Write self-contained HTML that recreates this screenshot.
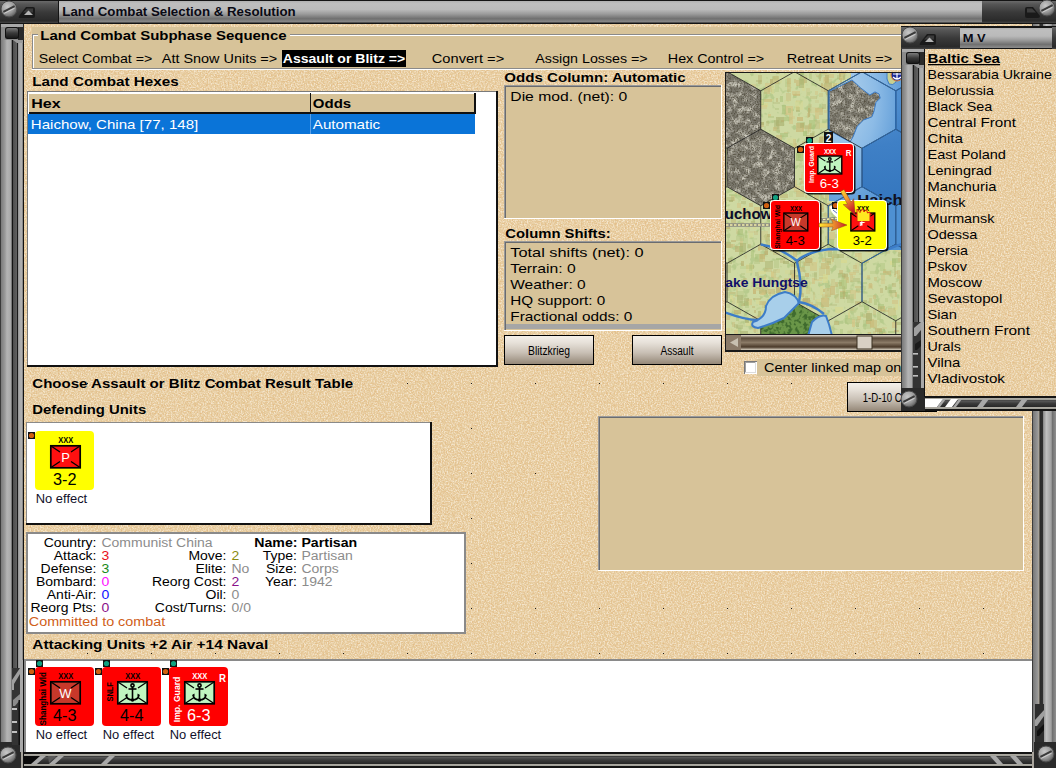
<!DOCTYPE html>
<html><head><meta charset="utf-8"><title>Land Combat Selection &amp; Resolution</title>
<style>html,body{margin:0;padding:0;width:1056px;height:768px;overflow:hidden;background:#e4cda4;font-family:"Liberation Sans", sans-serif}</style>
</head><body>
<svg width="1056" height="768" viewBox="0 0 1056 768" font-family="&quot;Liberation Sans&quot;, sans-serif" style="display:block">

<defs>
 <filter id="sand" x="0" y="0" width="100%" height="100%" color-interpolation-filters="sRGB">
  <feTurbulence type="fractalNoise" baseFrequency="0.7" numOctaves="2" seed="3"/>
  <feColorMatrix type="matrix" values="0 0 0 0 0.96  0 0 0 0 0.90  0 0 0 0 0.80  2.8 0 0 0 -1.15"/>
  <feComposite in2="SourceGraphic" operator="in"/>
 </filter>
 <filter id="sand2" x="0" y="0" width="100%" height="100%" color-interpolation-filters="sRGB">
  <feTurbulence type="fractalNoise" baseFrequency="0.6" numOctaves="2" seed="8"/>
  <feColorMatrix type="matrix" values="0 0 0 0 0.89  0 0 0 0 0.73  0 0 0 0 0.52  0 2.8 0 0 -1.25"/>
  <feComposite in2="SourceGraphic" operator="in"/>
 </filter>
 <linearGradient id="vframeL" x1="0" x2="1" y1="0" y2="0">
  <stop offset="0.0000" stop-color="#3a3a3a"/><stop offset="0.0417" stop-color="#3a3a3a"/><stop offset="0.0417" stop-color="#7a7a7a"/><stop offset="0.2083" stop-color="#9a9a9a"/><stop offset="0.2917" stop-color="#b4b4b4"/><stop offset="0.4583" stop-color="#a8a8a8"/><stop offset="0.4583" stop-color="#7a7a7a"/><stop offset="0.5000" stop-color="#7a7a7a"/><stop offset="0.5000" stop-color="#141414"/><stop offset="0.5417" stop-color="#141414"/><stop offset="0.5417" stop-color="#4e4e4e"/><stop offset="0.7083" stop-color="#626262"/><stop offset="0.7083" stop-color="#1a1a1a"/><stop offset="0.7500" stop-color="#1a1a1a"/><stop offset="0.7500" stop-color="#8a8a8a"/><stop offset="0.7917" stop-color="#a8a8a8"/><stop offset="0.9167" stop-color="#b0b0b0"/><stop offset="0.9167" stop-color="#8a8a8a"/><stop offset="0.9583" stop-color="#8a8a8a"/><stop offset="0.9583" stop-color="#111"/><stop offset="1.0000" stop-color="#111"/>
 </linearGradient>
 <linearGradient id="vframeR" x1="0" x2="1" y1="0" y2="0">
  <stop offset="0" stop-color="#1a1a1a"/><stop offset="0.06" stop-color="#7a7a7a"/>
  <stop offset="0.25" stop-color="#9a9a9a"/><stop offset="0.29" stop-color="#b0a898"/>
  <stop offset="0.33" stop-color="#2a2a2a"/><stop offset="0.45" stop-color="#303030"/>
  <stop offset="0.48" stop-color="#909090"/><stop offset="0.6" stop-color="#c0c0c0"/>
  <stop offset="0.8" stop-color="#a0a0a0"/><stop offset="0.85" stop-color="#707070"/>
  <stop offset="1" stop-color="#909090"/>
 </linearGradient>
 <linearGradient id="titleG" x1="0" x2="0" y1="0" y2="1">
  <stop offset="0" stop-color="#b0b0b0"/><stop offset="0.12" stop-color="#bebebe"/>
  <stop offset="0.4" stop-color="#bababa"/><stop offset="0.6" stop-color="#9c9c9c"/>
  <stop offset="0.82" stop-color="#707070"/><stop offset="1" stop-color="#8c8c8c"/>
 </linearGradient>
 <linearGradient id="darkG" x1="0" x2="0" y1="0" y2="1">
  <stop offset="0" stop-color="#6a6a6a"/><stop offset="0.15" stop-color="#555"/>
  <stop offset="0.5" stop-color="#3a3a3a"/><stop offset="0.9" stop-color="#2a2a2a"/>
  <stop offset="1" stop-color="#444"/>
 </linearGradient>
 <linearGradient id="hbarG" x1="0" x2="0" y1="0" y2="1">
  <stop offset="0" stop-color="#141414"/><stop offset="0.12" stop-color="#141414"/>
  <stop offset="0.12" stop-color="#b0aca4"/><stop offset="0.24" stop-color="#a0a098"/>
  <stop offset="0.24" stop-color="#1a1a1a"/><stop offset="0.32" stop-color="#5a5a5a"/>
  <stop offset="0.5" stop-color="#3a3a3a"/><stop offset="0.74" stop-color="#262626"/>
  <stop offset="0.74" stop-color="#b0aca4"/><stop offset="0.86" stop-color="#a0a098"/>
  <stop offset="0.86" stop-color="#141414"/><stop offset="1" stop-color="#141414"/>
 </linearGradient>
 <linearGradient id="btnG" x1="0" x2="0" y1="0" y2="1">
  <stop offset="0" stop-color="#f4f0ea"/><stop offset="0.25" stop-color="#e6e0d8"/>
  <stop offset="0.6" stop-color="#c8bfb4"/><stop offset="1" stop-color="#958878"/>
 </linearGradient>
 <radialGradient id="screwG" cx="0.4" cy="0.35" r="0.7">
  <stop offset="0" stop-color="#c8c8c8"/><stop offset="0.6" stop-color="#9a9a9a"/><stop offset="1" stop-color="#5a5a5a"/>
 </radialGradient>
 <linearGradient id="scrollG" x1="0" x2="0" y1="0" y2="1">
  <stop offset="0" stop-color="#e8e0d0"/><stop offset="0.2" stop-color="#5a4a3a"/>
  <stop offset="0.5" stop-color="#8a7a66"/><stop offset="0.8" stop-color="#4a3a2a"/><stop offset="1" stop-color="#d8d0c0"/>
 </linearGradient>
</defs>

<rect x="0" y="0" width="1056" height="768" fill="#e6cb9c" />
<rect x="0" y="0" width="1056" height="768" fill="#fff" filter="url(#sand2)"/>
<rect x="0" y="0" width="1056" height="768" fill="#fff" filter="url(#sand)"/>
<rect x="87" y="383" width="1" height="1" fill="#1a1a1a" />
<rect x="151" y="383" width="1" height="1" fill="#1a1a1a" />
<rect x="215" y="383" width="1" height="1" fill="#1a1a1a" />
<rect x="279" y="383" width="1" height="1" fill="#1a1a1a" />
<rect x="343" y="383" width="1" height="1" fill="#1a1a1a" />
<rect x="407" y="383" width="1" height="1" fill="#1a1a1a" />
<rect x="471" y="383" width="1" height="1" fill="#1a1a1a" />
<rect x="535" y="383" width="1" height="1" fill="#1a1a1a" />
<rect x="599" y="383" width="1" height="1" fill="#1a1a1a" />
<rect x="663" y="383" width="1" height="1" fill="#1a1a1a" />
<rect x="727" y="383" width="1" height="1" fill="#1a1a1a" />
<rect x="791" y="383" width="1" height="1" fill="#1a1a1a" />
<rect x="855" y="383" width="1" height="1" fill="#1a1a1a" />
<rect x="919" y="383" width="1" height="1" fill="#1a1a1a" />
<rect x="983" y="383" width="1" height="1" fill="#1a1a1a" />
<rect x="471" y="428" width="1" height="1" fill="#1a1a1a" />
<rect x="471" y="473" width="1" height="1" fill="#1a1a1a" />
<rect x="535" y="473" width="1" height="1" fill="#1a1a1a" />
<rect x="471" y="518" width="1" height="1" fill="#1a1a1a" />
<rect x="471" y="563" width="1" height="1" fill="#1a1a1a" />
<rect x="87" y="608" width="1" height="1" fill="#1a1a1a" />
<rect x="151" y="608" width="1" height="1" fill="#1a1a1a" />
<rect x="215" y="608" width="1" height="1" fill="#1a1a1a" />
<rect x="279" y="608" width="1" height="1" fill="#1a1a1a" />
<rect x="343" y="608" width="1" height="1" fill="#1a1a1a" />
<rect x="407" y="608" width="1" height="1" fill="#1a1a1a" />
<rect x="471" y="608" width="1" height="1" fill="#1a1a1a" />
<rect x="535" y="608" width="1" height="1" fill="#1a1a1a" />
<rect x="599" y="608" width="1" height="1" fill="#1a1a1a" />
<rect x="663" y="608" width="1" height="1" fill="#1a1a1a" />
<rect x="727" y="608" width="1" height="1" fill="#1a1a1a" />
<rect x="791" y="608" width="1" height="1" fill="#1a1a1a" />
<rect x="855" y="608" width="1" height="1" fill="#1a1a1a" />
<rect x="919" y="608" width="1" height="1" fill="#1a1a1a" />
<rect x="983" y="608" width="1" height="1" fill="#1a1a1a" />
<rect x="87" y="653" width="1" height="1" fill="#1a1a1a" />
<rect x="151" y="653" width="1" height="1" fill="#1a1a1a" />
<rect x="215" y="653" width="1" height="1" fill="#1a1a1a" />
<rect x="279" y="653" width="1" height="1" fill="#1a1a1a" />
<rect x="343" y="653" width="1" height="1" fill="#1a1a1a" />
<rect x="407" y="653" width="1" height="1" fill="#1a1a1a" />
<rect x="471" y="653" width="1" height="1" fill="#1a1a1a" />
<rect x="535" y="653" width="1" height="1" fill="#1a1a1a" />
<rect x="599" y="653" width="1" height="1" fill="#1a1a1a" />
<rect x="663" y="653" width="1" height="1" fill="#1a1a1a" />
<rect x="727" y="653" width="1" height="1" fill="#1a1a1a" />
<rect x="791" y="653" width="1" height="1" fill="#1a1a1a" />
<rect x="855" y="653" width="1" height="1" fill="#1a1a1a" />
<rect x="919" y="653" width="1" height="1" fill="#1a1a1a" />
<rect x="983" y="653" width="1" height="1" fill="#1a1a1a" />
<rect x="0" y="0" width="1056" height="24" fill="#141414" />
<rect x="0" y="1" width="58" height="22" fill="url(#darkG)" />
<rect x="59" y="1" width="923" height="21.5" fill="url(#titleG)" />
<rect x="982" y="1" width="74" height="22" fill="url(#darkG)" />
<circle cx="9" cy="9" r="8" fill="url(#screwG)" stroke="#4a4a4a" stroke-width="1"/>
<line x1="3.4000000000000004" y1="11.8" x2="14.6" y2="6.2" stroke="#3a3a3a" stroke-width="2"/>
<line x1="4.2" y1="13.4" x2="14.6" y2="8.2" stroke="#d0d0d0" stroke-width="1"/>
<path d="M26 7 H33 Q35 7 35 9 V16 Q35 18 33 18 H20 Q18 18 19 16 Z" fill="#1a1a1a"/>
<path d="M27 8.5 H33 V12.5 H23Z" fill="#3a3a3a"/>
<path d="M24.0 15 L28.5 10.5 L33.0 15 Z" fill="#b4b4b4"/>
<path d="M1027 7 H1033 L1040 16 Q1040 18 1038 18 H1027 Q1025 18 1025 16 V9 Q1025 7 1027 7 Z" fill="#1a1a1a"/>
<path d="M1027 8.5 H1032 L1036 12.5 H1027Z" fill="#3e3e3e"/>
<circle cx="1047" cy="8" r="8" fill="url(#screwG)" stroke="#4a4a4a" stroke-width="1"/>
<line x1="1041.4" y1="10.8" x2="1052.6" y2="5.2" stroke="#3a3a3a" stroke-width="2"/>
<line x1="1042.2" y1="12.4" x2="1052.6" y2="7.2" stroke="#d0d0d0" stroke-width="1"/>
<text x="62.3" y="16" font-size="12" font-weight="bold" fill="#0a0a14" textLength="233.4" lengthAdjust="spacingAndGlyphs" >Land Combat Selection &amp; Resolution</text>
<rect x="0" y="24" width="24" height="744" fill="url(#vframeL)" />
<rect x="0" y="24" width="24" height="16" fill="#2a2a2a" />
<rect x="1" y="24" width="22" height="3" fill="#a8a8a8" />
<rect x="1" y="27" width="17" height="13" fill="#8a8a8a" />
<defs><linearGradient id="blkG0" x1="0" x2="0" y1="0" y2="1"><stop offset="0" stop-color="#7a7a7a"/><stop offset="0.5" stop-color="#3a3a3a"/><stop offset="1" stop-color="#1a1a1a"/></linearGradient></defs>
<rect x="5" y="27" width="14" height="12" fill="#111" rx="2.5"/>
<rect x="6" y="28" width="12" height="10" fill="url(#blkG0)" rx="2"/>
<path d="M13 40 L23 40 L23 43 L17 43 Z" fill="#9a9a9a"/>
<rect x="1032" y="24" width="24" height="744" fill="url(#vframeR)" />
<rect x="24" y="752" width="1009" height="16" fill="url(#hbarG)" />
<path d="M24 756 H44 L37 764 H24 Z" fill="#0a0a0a"/>
<path d="M31 764 L40 756 L46 756 L37 764 Z" fill="#a8a8a8"/>
<path d="M49 764 L58 756 L64 756 L55 764 Z" fill="#a8a8a8"/>
<path d="M101 764 L109 756 L115 756 L107 764 Z" fill="#a8a8a8"/>
<path d="M48 756 L56 756 L49 763 Z" fill="#5a5a5a"/>
<path d="M990 756 L996 756 L1003 764 L997 764 Z" fill="#a8a8a8"/>
<path d="M1010 756 L1016 756 L1023 764 L1017 764 Z" fill="#a8a8a8"/>
<rect x="0" y="742" width="22" height="26" fill="#2a2a2a" />
<rect x="21" y="752" width="2" height="16" fill="#a8a49c" />
<circle cx="8" cy="755" r="8" fill="url(#screwG)" stroke="#4a4a4a" stroke-width="1"/>
<line x1="2.4000000000000004" y1="757.8" x2="13.6" y2="752.2" stroke="#3a3a3a" stroke-width="2"/>
<line x1="3.2" y1="759.4" x2="13.6" y2="754.2" stroke="#d0d0d0" stroke-width="1"/>
<rect x="1035" y="704" width="9" height="40" fill="#2e2e2e" />
<path d="M1044 710 L1044 716 L1037 726 L1035 726 L1035 720 Z" fill="#a0a0a0"/>
<path d="M1044 724 L1044 730 L1039 736 L1037 736 L1037 731 Z" fill="#111"/>
<rect x="1034" y="742" width="22" height="26" fill="#2a2a2a" />
<rect x="1032" y="752" width="2" height="16" fill="#a8a49c" />
<circle cx="1046" cy="754" r="8" fill="url(#screwG)" stroke="#4a4a4a" stroke-width="1"/>
<line x1="1040.4" y1="756.8" x2="1051.6" y2="751.2" stroke="#3a3a3a" stroke-width="2"/>
<line x1="1041.2" y1="758.4" x2="1051.6" y2="753.2" stroke="#d0d0d0" stroke-width="1"/>
<rect x="12" y="668" width="8" height="77" fill="#333" />
<path d="M20 668 L20 674 L14 684 L14 690 L12 690 L12 680 Z" fill="#a0a0a0"/>
<path d="M20 694 L20 700 L15 706 L13 706 L13 700 Z" fill="#8a8a8a"/>
<rect x="18.5" y="700" width="1.5" height="45" fill="#111" />
<rect x="20" y="660" width="3" height="92" fill="#a8a8a8" />
<rect x="12" y="708" width="5" height="2" fill="#c0c0c0" />
<rect x="12" y="721" width="5" height="2" fill="#c0c0c0" />
<rect x="12" y="731" width="5" height="2" fill="#c0c0c0" />
<rect x="32" y="27" width="870" height="43" fill="#d7c399" />
<rect x="32" y="34" width="870" height="1" fill="#8a8a8a" />
<rect x="33" y="35" width="869" height="1" fill="#fff" />
<rect x="32" y="34" width="1" height="35" fill="#8a8a8a" />
<rect x="33" y="35" width="1" height="34" fill="#fff" />
<rect x="32" y="68" width="870" height="1" fill="#8a8a8a" />
<rect x="32" y="69" width="870" height="1" fill="#fff" />
<rect x="38" y="27" width="252" height="14" fill="#d7c399" />
<text x="40.3" y="40" font-size="13" font-weight="bold" fill="#000" textLength="246.4" lengthAdjust="spacingAndGlyphs" >Land Combat Subphase Sequence</text>
<text x="38.8" y="63" font-size="13" fill="#000" textLength="113.4" lengthAdjust="spacingAndGlyphs" >Select Combat =&gt;</text>
<text x="161.8" y="63" font-size="13" fill="#000" textLength="115.4" lengthAdjust="spacingAndGlyphs" >Att Snow Units =&gt;</text>
<rect x="282" y="50" width="124" height="17" fill="#000" />
<text x="282.8" y="63" font-size="13" font-weight="bold" fill="#fff" textLength="122.4" lengthAdjust="spacingAndGlyphs" >Assault or Blitz =&gt;</text>
<text x="431.8" y="63" font-size="13" fill="#000" textLength="72.4" lengthAdjust="spacingAndGlyphs" >Convert =&gt;</text>
<text x="535.3" y="63" font-size="13" fill="#000" textLength="112.4" lengthAdjust="spacingAndGlyphs" >Assign Losses =&gt;</text>
<text x="667.8" y="63" font-size="13" fill="#000" textLength="96.4" lengthAdjust="spacingAndGlyphs" >Hex Control =&gt;</text>
<text x="786.8" y="63" font-size="13" fill="#000" textLength="105.4" lengthAdjust="spacingAndGlyphs" >Retreat Units =&gt;</text>
<text x="32.3" y="86" font-size="13" font-weight="bold" fill="#000" textLength="146.4" lengthAdjust="spacingAndGlyphs" >Land Combat Hexes</text>
<rect x="27" y="91" width="471" height="276" fill="#fff" />
<rect x="27" y="91" width="470" height="1" fill="#7a7a7a" />
<rect x="27" y="91" width="1" height="275" fill="#7a7a7a" />
<rect x="496" y="91" width="2" height="276" fill="#111" />
<rect x="27" y="365" width="471" height="2" fill="#111" />
<rect x="29" y="93" width="447" height="20" fill="#d7c399" />
<rect x="28" y="93" width="448" height="1" fill="#fff" />
<rect x="310" y="93" width="1" height="20" fill="#111" />
<rect x="474" y="93" width="2" height="21" fill="#111" />
<rect x="29" y="112" width="447" height="2" fill="#111" />
<text x="31.3" y="108" font-size="13" font-weight="bold" fill="#000" textLength="29.4" lengthAdjust="spacingAndGlyphs" >Hex</text>
<text x="312.8" y="108" font-size="13" font-weight="bold" fill="#000" textLength="38.4" lengthAdjust="spacingAndGlyphs" >Odds</text>
<rect x="28" y="114" width="447" height="20" fill="#0a74d8" />
<rect x="310" y="114" width="1" height="20" fill="#5aa0e8" />
<text x="30.8" y="129" font-size="13" fill="#fff" textLength="167.4" lengthAdjust="spacingAndGlyphs" >Haichow, China [77, 148]</text>
<text x="312.8" y="129" font-size="13" fill="#fff" textLength="67.4" lengthAdjust="spacingAndGlyphs" >Automatic</text>
<text x="504.3" y="82" font-size="13" font-weight="bold" fill="#000" textLength="181.4" lengthAdjust="spacingAndGlyphs" >Odds Column: Automatic</text>
<rect x="504" y="85" width="218" height="134" fill="#d7c399" />
<rect x="504" y="85" width="218" height="2" fill="#9a9a9a" />
<rect x="504" y="85" width="2" height="134" fill="#9a9a9a" />
<rect x="505" y="86" width="216" height="1" fill="#6a6c70" />
<rect x="505" y="86" width="1" height="132" fill="#6a6c70" />
<rect x="504" y="218" width="218" height="1" fill="#fff" />
<rect x="721" y="85" width="1" height="134" fill="#fff" />
<text x="510.3" y="101" font-size="13" fill="#000" textLength="116.9" lengthAdjust="spacingAndGlyphs" >Die mod. (net): 0</text>
<text x="505.3" y="238" font-size="13" font-weight="bold" fill="#000" textLength="105.4" lengthAdjust="spacingAndGlyphs" >Column Shifts:</text>
<rect x="504" y="241" width="218" height="90" fill="#d7c399" />
<rect x="504" y="241" width="218" height="2" fill="#9a9a9a" />
<rect x="504" y="241" width="2" height="90" fill="#9a9a9a" />
<rect x="505" y="242" width="216" height="1" fill="#6a6c70" />
<rect x="505" y="242" width="1" height="88" fill="#6a6c70" />
<rect x="504" y="330" width="218" height="1" fill="#fff" />
<rect x="721" y="241" width="1" height="90" fill="#fff" />
<rect x="506" y="324" width="215" height="5" fill="#a6a6a6" />
<text x="510.3" y="257" font-size="13" fill="#000" textLength="133.4" lengthAdjust="spacingAndGlyphs" >Total shifts (net): 0</text>
<text x="510.3" y="273" font-size="13" fill="#000" textLength="65.4" lengthAdjust="spacingAndGlyphs" >Terrain: 0</text>
<text x="510.3" y="289" font-size="13" fill="#000" textLength="75.4" lengthAdjust="spacingAndGlyphs" >Weather: 0</text>
<text x="510.3" y="305" font-size="13" fill="#000" textLength="94.9" lengthAdjust="spacingAndGlyphs" >HQ support: 0</text>
<text x="510.3" y="321" font-size="13" fill="#000" textLength="121.9" lengthAdjust="spacingAndGlyphs" >Fractional odds: 0</text>
<rect x="504" y="335" width="90" height="30" fill="#000" />
<rect x="505" y="336" width="88" height="28" fill="url(#btnG)" />
<text x="549.0" y="354.5" font-size="12" fill="#000" textLength="42" lengthAdjust="spacingAndGlyphs" text-anchor="middle" >Blitzkrieg</text>
<rect x="632" y="335" width="90" height="30" fill="#000" />
<rect x="633" y="336" width="88" height="28" fill="url(#btnG)" />
<text x="677.0" y="354.5" font-size="12" fill="#000" textLength="33" lengthAdjust="spacingAndGlyphs" text-anchor="middle" >Assault</text>
<text x="32.3" y="388" font-size="13" font-weight="bold" fill="#000" textLength="320.9" lengthAdjust="spacingAndGlyphs" >Choose Assault or Blitz Combat Result Table</text>
<text x="32.3" y="413.5" font-size="13" font-weight="bold" fill="#000" textLength="113.9" lengthAdjust="spacingAndGlyphs" >Defending Units</text>
<text x="32.3" y="648.5" font-size="13" font-weight="bold" fill="#000" textLength="235.9" lengthAdjust="spacingAndGlyphs" >Attacking Units +2 Air +14 Naval</text>
<rect x="757" y="359" width="145" height="17" fill="#d7c399" />
<rect x="744" y="361" width="13" height="13" fill="#fff" />
<rect x="744" y="361" width="13" height="1" fill="#7a7a7a" />
<rect x="744" y="361" width="1" height="13" fill="#7a7a7a" />
<rect x="745" y="362" width="11" height="1" fill="#a0a0a0" />
<rect x="745" y="362" width="1" height="11" fill="#a0a0a0" />
<rect x="745" y="372" width="11" height="1" fill="#dcdcdc" />
<rect x="755" y="362" width="1" height="11" fill="#dcdcdc" />
<text x="764" y="372" font-size="13" fill="#000" textLength="137.2" lengthAdjust="spacingAndGlyphs" >Center linked map on</text>
<rect x="847" y="382" width="90" height="30" fill="#000" />
<rect x="848" y="383" width="88" height="28" fill="url(#btnG)" />
<text x="862.8" y="401.5" font-size="12" fill="#000" textLength="51.4" lengthAdjust="spacingAndGlyphs" >1-D-10 CRT</text>
<rect x="26" y="422" width="406" height="103" fill="#fff" />
<rect x="26" y="422" width="406" height="1" fill="#8a8a8a" />
<rect x="26" y="422" width="1" height="103" fill="#8a8a8a" />
<rect x="26" y="523" width="406" height="2" fill="#111" />
<rect x="430" y="422" width="2" height="103" fill="#111" />
<rect x="26" y="532" width="440" height="102" fill="#fff" />
<rect x="26" y="532" width="440" height="2" fill="#8a8a8a" />
<rect x="26" y="532" width="2" height="102" fill="#8a8a8a" />
<rect x="26" y="632" width="440" height="2" fill="#8a8a8a" />
<rect x="464" y="532" width="2" height="102" fill="#8a8a8a" />
<rect x="598" y="416" width="426" height="155" fill="#d7c399" />
<rect x="598" y="416" width="426" height="2" fill="#9a9a9a" />
<rect x="598" y="416" width="2" height="155" fill="#9a9a9a" />
<rect x="599" y="417" width="424" height="1" fill="#6a6c70" />
<rect x="599" y="417" width="1" height="153" fill="#6a6c70" />
<rect x="598" y="570" width="426" height="1" fill="#fff" />
<rect x="1023" y="416" width="1" height="155" fill="#fff" />
<rect x="24" y="659" width="1008" height="93" fill="#fff" />
<rect x="24" y="659" width="1008" height="2" fill="#8a8a8a" />
<rect x="24" y="659" width="2" height="93" fill="#8a8a8a" />
<text x="96.5" y="546.5" font-size="12" fill="#000" textLength="52.8" lengthAdjust="spacingAndGlyphs" text-anchor="end" >Country:</text>
<text x="101.5" y="546.5" font-size="12" fill="#8c8c8c" textLength="111.1" lengthAdjust="spacingAndGlyphs" >Communist China</text>
<text x="96.5" y="559.5" font-size="12" fill="#000" textLength="42.7" lengthAdjust="spacingAndGlyphs" text-anchor="end" >Attack:</text>
<text x="101.5" y="559.5" font-size="12" fill="#e8101a" textLength="7.8" lengthAdjust="spacingAndGlyphs" >3</text>
<text x="96.5" y="572.5" font-size="12" fill="#000" textLength="55.9" lengthAdjust="spacingAndGlyphs" text-anchor="end" >Defense:</text>
<text x="101.5" y="572.5" font-size="12" fill="#1a8a1a" textLength="7.8" lengthAdjust="spacingAndGlyphs" >3</text>
<text x="96.5" y="585.5" font-size="12" fill="#000" textLength="60.6" lengthAdjust="spacingAndGlyphs" text-anchor="end" >Bombard:</text>
<text x="101.5" y="585.5" font-size="12" fill="#ff10ff" textLength="7.8" lengthAdjust="spacingAndGlyphs" >0</text>
<text x="96.5" y="598.5" font-size="12" fill="#000" textLength="49.7" lengthAdjust="spacingAndGlyphs" text-anchor="end" >Anti-Air:</text>
<text x="101.5" y="598.5" font-size="12" fill="#1010ff" textLength="7.8" lengthAdjust="spacingAndGlyphs" >0</text>
<text x="96.5" y="611.5" font-size="12" fill="#000" textLength="66.0" lengthAdjust="spacingAndGlyphs" text-anchor="end" >Reorg Pts:</text>
<text x="101.5" y="611.5" font-size="12" fill="#8a108a" textLength="7.8" lengthAdjust="spacingAndGlyphs" >0</text>
<text x="28.8" y="625.5" font-size="12" fill="#d0601a" textLength="136.4" lengthAdjust="spacingAndGlyphs" >Committed to combat</text>
<text x="226.5" y="559.5" font-size="12" fill="#000" textLength="38.1" lengthAdjust="spacingAndGlyphs" text-anchor="end" >Move:</text>
<text x="231.5" y="559.5" font-size="12" fill="#8a8a10" textLength="7.8" lengthAdjust="spacingAndGlyphs" >2</text>
<text x="226.5" y="572.5" font-size="12" fill="#000" textLength="31.1" lengthAdjust="spacingAndGlyphs" text-anchor="end" >Elite:</text>
<text x="231.5" y="572.5" font-size="12" fill="#8c8c8c" textLength="17.9" lengthAdjust="spacingAndGlyphs" >No</text>
<text x="226.5" y="585.5" font-size="12" fill="#000" textLength="74.6" lengthAdjust="spacingAndGlyphs" text-anchor="end" >Reorg Cost:</text>
<text x="231.5" y="585.5" font-size="12" fill="#8a108a" textLength="7.8" lengthAdjust="spacingAndGlyphs" >2</text>
<text x="226.5" y="598.5" font-size="12" fill="#000" textLength="21.0" lengthAdjust="spacingAndGlyphs" text-anchor="end" >Oil:</text>
<text x="231.5" y="598.5" font-size="12" fill="#8c8c8c" textLength="7.8" lengthAdjust="spacingAndGlyphs" >0</text>
<text x="226.5" y="611.5" font-size="12" fill="#000" textLength="71.7" lengthAdjust="spacingAndGlyphs" text-anchor="end" >Cost/Turns:</text>
<text x="231.5" y="611.5" font-size="12" fill="#8c8c8c" textLength="19.4" lengthAdjust="spacingAndGlyphs" >0/0</text>
<text x="254.3" y="546.5" font-size="12" font-weight="bold" fill="#000" textLength="102.9" lengthAdjust="spacingAndGlyphs" >Name: Partisan</text>
<text x="297" y="559.5" font-size="12" fill="#000" textLength="34.2" lengthAdjust="spacingAndGlyphs" text-anchor="end" >Type:</text>
<text x="301.5" y="559.5" font-size="12" fill="#8c8c8c" textLength="51.3" lengthAdjust="spacingAndGlyphs" >Partisan</text>
<text x="297" y="572.5" font-size="12" fill="#000" textLength="31.1" lengthAdjust="spacingAndGlyphs" text-anchor="end" >Size:</text>
<text x="301.5" y="572.5" font-size="12" fill="#8c8c8c" textLength="37.3" lengthAdjust="spacingAndGlyphs" >Corps</text>
<text x="297" y="585.5" font-size="12" fill="#000" textLength="32.1" lengthAdjust="spacingAndGlyphs" text-anchor="end" >Year:</text>
<text x="301.5" y="585.5" font-size="12" fill="#8c8c8c" textLength="31.1" lengthAdjust="spacingAndGlyphs" >1942</text>
<rect x="28" y="432" width="7" height="7" fill="#111" />
<circle cx="31.5" cy="435.5" r="2.6" fill="#d06010"/>
<g transform="translate(35,431) scale(1)">
<rect x="0" y="0" width="59" height="59" rx="4" fill="#ffff00"/>
<text x="30.8" y="12.3" font-size="9" font-weight="bold" fill="#000" textLength="15" lengthAdjust="spacingAndGlyphs" text-anchor="middle" >XXX</text>
<rect x="15.8" y="14.8" width="29.4" height="22" fill="#ff1010" stroke="#000" stroke-width="1.7"/>
<line x1="16" y1="15" x2="25" y2="21" stroke="#000" stroke-width="1.3"/>
<line x1="45" y1="15" x2="36" y2="21" stroke="#000" stroke-width="1.3"/>
<line x1="16" y1="36.5" x2="25" y2="30.5" stroke="#000" stroke-width="1.3"/>
<line x1="45" y1="36.5" x2="36" y2="30.5" stroke="#000" stroke-width="1.3"/>
<text x="30.5" y="30.5" font-size="13" fill="#fff" text-anchor="middle" >P</text>
<text x="29.8" y="54.2" font-size="16" fill="#000" textLength="23.5" lengthAdjust="spacingAndGlyphs" text-anchor="middle" >3-2</text>
</g>
<text x="35.8" y="502.5" font-size="12" fill="#10102a" textLength="51.4" lengthAdjust="spacingAndGlyphs" >No effect</text>
<rect x="28" y="668" width="7" height="7" fill="#111" />
<circle cx="31.5" cy="671.5" r="2.6" fill="#d06010"/>
<rect x="36" y="660" width="7" height="7" fill="#111" />
<circle cx="39.5" cy="663.5" r="2.6" fill="#10a080"/>
<g transform="translate(35,667) scale(1)">
<rect x="0" y="0" width="59" height="59" rx="4" fill="#ff0000"/>
<text x="30.8" y="12.3" font-size="9" font-weight="bold" fill="#000" textLength="15" lengthAdjust="spacingAndGlyphs" text-anchor="middle" >XXX</text>
<rect x="15.8" y="14.8" width="29.4" height="22" fill="#c8382a" stroke="#000" stroke-width="1.7"/>
<line x1="16" y1="15" x2="25" y2="21" stroke="#000" stroke-width="1.3"/>
<line x1="45" y1="15" x2="36" y2="21" stroke="#000" stroke-width="1.3"/>
<line x1="16" y1="36.5" x2="25" y2="30.5" stroke="#000" stroke-width="1.3"/>
<line x1="45" y1="36.5" x2="36" y2="30.5" stroke="#000" stroke-width="1.3"/>
<text x="30.5" y="30.5" font-size="13" fill="#fff" text-anchor="middle" >W</text>
<text x="29.8" y="54.2" font-size="16" fill="#000" textLength="23.5" lengthAdjust="spacingAndGlyphs" text-anchor="middle" >4-3</text>
<g transform="translate(11.4,58.4) rotate(-90)">
<text x="0" y="0" font-size="9.5" font-weight="bold" fill="#000" textLength="53.4" lengthAdjust="spacingAndGlyphs" >Shanghai Wld</text>
</g>
</g>
<text x="35.8" y="738.5" font-size="12" fill="#10102a" textLength="51.4" lengthAdjust="spacingAndGlyphs" >No effect</text>
<rect x="95" y="668" width="7" height="7" fill="#111" />
<circle cx="98.5" cy="671.5" r="2.6" fill="#d06010"/>
<rect x="103" y="660" width="7" height="7" fill="#111" />
<circle cx="106.5" cy="663.5" r="2.6" fill="#10a080"/>
<g transform="translate(102,667) scale(1)">
<rect x="0" y="0" width="59" height="59" rx="4" fill="#ff0000"/>
<text x="30.8" y="12.3" font-size="9" font-weight="bold" fill="#000" textLength="15" lengthAdjust="spacingAndGlyphs" text-anchor="middle" >XXX</text>
<rect x="15.8" y="14.8" width="29.4" height="22" fill="#c0f5c0" stroke="#000" stroke-width="1.7"/>
<line x1="16" y1="15" x2="25" y2="21" stroke="#000" stroke-width="1.3"/>
<line x1="45" y1="15" x2="36" y2="21" stroke="#000" stroke-width="1.3"/>
<line x1="16" y1="36.5" x2="25" y2="30.5" stroke="#000" stroke-width="1.3"/>
<line x1="45" y1="36.5" x2="36" y2="30.5" stroke="#000" stroke-width="1.3"/>
<g stroke="#000" fill="none" stroke-width="1.6"><circle cx="30.5" cy="18.5" r="1.6"/><line x1="30.5" y1="20" x2="30.5" y2="33"/><line x1="26.5" y1="22" x2="34.5" y2="22"/><path d="M24 28 Q25 33 30.5 33 Q36 33 37 28"/></g><path d="M23 28 L25.5 26.5 L25.5 29.5Z M38 28 L35.5 26.5 L35.5 29.5Z" fill="#000"/><circle cx="30.5" cy="33" r="1.8" fill="#000"/>
<text x="29.8" y="54.2" font-size="16" fill="#000" textLength="23.5" lengthAdjust="spacingAndGlyphs" text-anchor="middle" >4-4</text>
<g transform="translate(11.4,34.6) rotate(-90)">
<text x="0" y="0" font-size="9.5" font-weight="bold" fill="#000" textLength="19.5" lengthAdjust="spacingAndGlyphs" >SNLF</text>
</g>
</g>
<text x="102.8" y="738.5" font-size="12" fill="#10102a" textLength="51.4" lengthAdjust="spacingAndGlyphs" >No effect</text>
<rect x="162" y="668" width="7" height="7" fill="#111" />
<circle cx="165.5" cy="671.5" r="2.6" fill="#d06010"/>
<rect x="170" y="660" width="7" height="7" fill="#111" />
<circle cx="173.5" cy="663.5" r="2.6" fill="#10a080"/>
<g transform="translate(169,667) scale(1)">
<rect x="0" y="0" width="59" height="59" rx="4" fill="#ff0000"/>
<text x="30.8" y="12.3" font-size="9" font-weight="bold" fill="#fff" textLength="15" lengthAdjust="spacingAndGlyphs" text-anchor="middle" >XXX</text>
<rect x="15.8" y="14.8" width="29.4" height="22" fill="#c0f5c0" stroke="#000" stroke-width="1.7"/>
<line x1="16" y1="15" x2="25" y2="21" stroke="#000" stroke-width="1.3"/>
<line x1="45" y1="15" x2="36" y2="21" stroke="#000" stroke-width="1.3"/>
<line x1="16" y1="36.5" x2="25" y2="30.5" stroke="#000" stroke-width="1.3"/>
<line x1="45" y1="36.5" x2="36" y2="30.5" stroke="#000" stroke-width="1.3"/>
<g stroke="#000" fill="none" stroke-width="1.6"><circle cx="30.5" cy="18.5" r="1.6"/><line x1="30.5" y1="20" x2="30.5" y2="33"/><line x1="26.5" y1="22" x2="34.5" y2="22"/><path d="M24 28 Q25 33 30.5 33 Q36 33 37 28"/></g><path d="M23 28 L25.5 26.5 L25.5 29.5Z M38 28 L35.5 26.5 L35.5 29.5Z" fill="#000"/><circle cx="30.5" cy="33" r="1.8" fill="#000"/>
<text x="29.8" y="54.2" font-size="16" fill="#fff" textLength="23.5" lengthAdjust="spacingAndGlyphs" text-anchor="middle" >6-3</text>
<g transform="translate(11.4,55.2) rotate(-90)">
<text x="0" y="0" font-size="9.5" font-weight="bold" fill="#fff" textLength="45.5" lengthAdjust="spacingAndGlyphs" >Imp. Guard</text>
</g>
<text x="50" y="14.5" font-size="10" font-weight="bold" fill="#fff" textLength="7" lengthAdjust="spacingAndGlyphs" >R</text>
</g>
<text x="169.8" y="738.5" font-size="12" fill="#10102a" textLength="51.4" lengthAdjust="spacingAndGlyphs" >No effect</text>
<defs><clipPath id="mapclip"><rect x="726" y="73" width="176" height="261"/></clipPath><clipPath id="roughclip"><path d="M727.0,71.7 L760.75,90.8 L760.75,129.2 L727.0,148.3 L693.25,129.2 L693.25,90.8Z M760.75,129.2 L794.5,148.3 L794.5,186.7 L760.75,205.8 L727.0,186.7 L727.0,148.3Z M862.0,71.7 L895.75,90.8 L895.75,129.2 L862.0,148.3 L828.25,129.2 L828.25,90.8Z"/></clipPath><clipPath id="forestclip"><path d="M794.5,301.7 L828.25,320.8 L828.25,359.2 L794.5,378.3 L760.75,359.2 L760.75,320.8Z"/></clipPath><filter id="cl1" x="0" y="0" width="100%" height="100%" color-interpolation-filters="sRGB"><feTurbulence type="fractalNoise" baseFrequency="0.14" numOctaves="2" seed="4"/><feColorMatrix type="matrix" values="0 0 0 0 0.78  0 0 0 0 0.72  0 0 0 0 0.48  7 0 0 0 -3.9"/><feComposite in2="SourceGraphic" operator="in"/></filter><filter id="cl2" x="0" y="0" width="100%" height="100%" color-interpolation-filters="sRGB"><feTurbulence type="fractalNoise" baseFrequency="0.16" numOctaves="2" seed="9"/><feColorMatrix type="matrix" values="0 0 0 0 0.66  0 0 0 0 0.76  0 0 0 0 0.5  7 0 0 0 -3.9"/><feComposite in2="SourceGraphic" operator="in"/></filter><filter id="cl3" x="0" y="0" width="100%" height="100%" color-interpolation-filters="sRGB"><feTurbulence type="fractalNoise" baseFrequency="0.35" numOctaves="2" seed="21"/><feColorMatrix type="matrix" values="0 0 0 0 0.72  0 0 0 0 0.66  0 0 0 0 0.42  6 0 0 0 -3.4"/><feComposite in2="SourceGraphic" operator="in"/></filter><filter id="rk1" x="0" y="0" width="100%" height="100%" color-interpolation-filters="sRGB"><feTurbulence type="fractalNoise" baseFrequency="0.16" numOctaves="4" seed="5"/><feColorMatrix type="matrix" values="0 0 0 0 0.8  0 0 0 0 0.79  0 0 0 0 0.74  2.7 0 0 0 -1.1"/><feComposite in2="SourceGraphic" operator="in"/></filter><filter id="rk2" x="0" y="0" width="100%" height="100%" color-interpolation-filters="sRGB"><feTurbulence type="fractalNoise" baseFrequency="0.7" numOctaves="2" seed="13"/><feColorMatrix type="matrix" values="0 0 0 0 0.3  0 0 0 0 0.28  0 0 0 0 0.22  2.2 0 0 0 -0.95"/><feComposite in2="SourceGraphic" operator="in"/></filter><filter id="fo1" x="0" y="0" width="100%" height="100%" color-interpolation-filters="sRGB"><feTurbulence type="fractalNoise" baseFrequency="0.25" numOctaves="3" seed="17"/><feColorMatrix type="matrix" values="0 0 0 0 0.25  0 0 0 0 0.42  0 0 0 0 0.18  5 0 0 0 -2.3"/><feComposite in2="SourceGraphic" operator="in"/></filter><linearGradient id="seaG" x1="0" x2="1" y1="0" y2="1"><stop offset="0" stop-color="#a6cbea"/><stop offset="0.45" stop-color="#5e9bd6"/><stop offset="1" stop-color="#3474bf"/></linearGradient><linearGradient id="seaG2" x1="0" x2="1" y1="0" y2="1"><stop offset="0" stop-color="#8cbce6"/><stop offset="0.35" stop-color="#4a8ad0"/><stop offset="1" stop-color="#2a6cb8"/></linearGradient></defs>
<rect x="725" y="72" width="177" height="280" fill="#1a1a1a" />
<g clip-path="url(#mapclip)">
<rect x="726" y="73" width="176" height="261" fill="#ced9a2" />
<rect x="726" y="73" width="176" height="261" fill="#fff" filter="url(#cl2)" opacity="0.6"/>
<rect x="837" y="75" width="4" height="4" fill="#a9b06e" opacity="0.31"/><rect x="740" y="266" width="8" height="3" fill="#a8c078" opacity="0.26"/><rect x="739" y="130" width="2" height="4" fill="#a8c078" opacity="0.35"/><rect x="828" y="285" width="2" height="4" fill="#a8c078" opacity="0.40"/><rect x="750" y="325" width="5" height="3" fill="#b9ad6c" opacity="0.42"/><rect x="787" y="160" width="4" height="2" fill="#d8d890" opacity="0.49"/><rect x="897" y="169" width="8" height="5" fill="#c9bb7a" opacity="0.51"/><rect x="849" y="80" width="4" height="5" fill="#b9ad6c" opacity="0.63"/><rect x="878" y="170" width="7" height="6" fill="#d4c282" opacity="0.42"/><rect x="760" y="140" width="3" height="4" fill="#a9b06e" opacity="0.32"/><rect x="790" y="333" width="8" height="4" fill="#c9bb7a" opacity="0.63"/><rect x="862" y="129" width="2" height="6" fill="#a8c078" opacity="0.37"/><rect x="760" y="321" width="5" height="4" fill="#d8d890" opacity="0.43"/><rect x="887" y="191" width="4" height="4" fill="#a9b06e" opacity="0.59"/><rect x="819" y="268" width="6" height="8" fill="#c9bb7a" opacity="0.35"/><rect x="902" y="205" width="3" height="2" fill="#b9ad6c" opacity="0.32"/><rect x="751" y="250" width="3" height="8" fill="#a8c078" opacity="0.52"/><rect x="806" y="135" width="8" height="2" fill="#b9ad6c" opacity="0.56"/><rect x="819" y="140" width="5" height="3" fill="#b8c888" opacity="0.45"/><rect x="804" y="324" width="4" height="4" fill="#b9ad6c" opacity="0.64"/><rect x="776" y="239" width="4" height="4" fill="#c9bb7a" opacity="0.59"/><rect x="819" y="277" width="8" height="2" fill="#c9bb7a" opacity="0.47"/><rect x="742" y="165" width="4" height="4" fill="#c8b473" opacity="0.36"/><rect x="824" y="89" width="7" height="3" fill="#d4c282" opacity="0.31"/><rect x="808" y="215" width="4" height="8" fill="#a9b06e" opacity="0.67"/><rect x="858" y="253" width="4" height="8" fill="#c9bb7a" opacity="0.45"/><rect x="815" y="100" width="4" height="3" fill="#c9bb7a" opacity="0.26"/><rect x="822" y="226" width="2" height="3" fill="#c8b473" opacity="0.35"/><rect x="885" y="298" width="3" height="4" fill="#b8c888" opacity="0.55"/><rect x="761" y="103" width="7" height="4" fill="#d8d890" opacity="0.61"/><rect x="756" y="94" width="6" height="6" fill="#a8c078" opacity="0.43"/><rect x="877" y="83" width="3" height="2" fill="#a8c078" opacity="0.58"/><rect x="866" y="97" width="4" height="4" fill="#d8d890" opacity="0.31"/><rect x="755" y="192" width="3" height="9" fill="#b9ad6c" opacity="0.27"/><rect x="902" y="292" width="3" height="4" fill="#d4c282" opacity="0.43"/><rect x="809" y="300" width="2" height="4" fill="#a8c078" opacity="0.25"/><rect x="792" y="316" width="7" height="5" fill="#a8c078" opacity="0.56"/><rect x="853" y="278" width="7" height="4" fill="#a9b06e" opacity="0.38"/><rect x="896" y="223" width="8" height="2" fill="#c9bb7a" opacity="0.28"/><rect x="827" y="203" width="8" height="4" fill="#c8b473" opacity="0.68"/><rect x="736" y="118" width="3" height="4" fill="#a8c078" opacity="0.30"/><rect x="882" y="134" width="2" height="3" fill="#a8c078" opacity="0.55"/><rect x="824" y="153" width="4" height="4" fill="#c9bb7a" opacity="0.36"/><rect x="793" y="248" width="4" height="9" fill="#c9bb7a" opacity="0.67"/><rect x="890" y="70" width="3" height="3" fill="#a9b06e" opacity="0.48"/><rect x="746" y="162" width="3" height="4" fill="#c9bb7a" opacity="0.38"/><rect x="801" y="214" width="4" height="2" fill="#b8c888" opacity="0.67"/><rect x="741" y="303" width="4" height="3" fill="#b9ad6c" opacity="0.58"/><rect x="750" y="144" width="4" height="6" fill="#a9b06e" opacity="0.56"/><rect x="876" y="203" width="4" height="2" fill="#b9ad6c" opacity="0.54"/><rect x="871" y="80" width="5" height="4" fill="#b8c888" opacity="0.32"/><rect x="802" y="257" width="8" height="2" fill="#b9ad6c" opacity="0.28"/><rect x="881" y="310" width="8" height="2" fill="#c9bb7a" opacity="0.51"/><rect x="749" y="102" width="4" height="6" fill="#c8b473" opacity="0.65"/><rect x="760" y="135" width="3" height="6" fill="#a8c078" opacity="0.69"/><rect x="857" y="316" width="4" height="4" fill="#d4c282" opacity="0.65"/><rect x="726" y="265" width="5" height="8" fill="#a9b06e" opacity="0.37"/><rect x="864" y="97" width="2" height="9" fill="#a9b06e" opacity="0.34"/><rect x="887" y="162" width="4" height="4" fill="#c8b473" opacity="0.55"/><rect x="794" y="143" width="3" height="5" fill="#c9bb7a" opacity="0.54"/><rect x="794" y="331" width="8" height="6" fill="#c8b473" opacity="0.30"/><rect x="897" y="116" width="4" height="2" fill="#b9ad6c" opacity="0.52"/><rect x="784" y="279" width="6" height="3" fill="#a8c078" opacity="0.65"/><rect x="756" y="80" width="6" height="2" fill="#a9b06e" opacity="0.41"/><rect x="735" y="246" width="5" height="6" fill="#b9ad6c" opacity="0.57"/><rect x="776" y="151" width="6" height="6" fill="#a8c078" opacity="0.56"/><rect x="822" y="119" width="6" height="4" fill="#b8c888" opacity="0.43"/><rect x="872" y="149" width="4" height="8" fill="#c9bb7a" opacity="0.46"/><rect x="802" y="125" width="7" height="4" fill="#b9ad6c" opacity="0.38"/><rect x="841" y="234" width="3" height="4" fill="#b8c888" opacity="0.35"/><rect x="758" y="75" width="4" height="9" fill="#b9ad6c" opacity="0.45"/><rect x="882" y="222" width="6" height="9" fill="#a8c078" opacity="0.36"/><rect x="840" y="69" width="3" height="8" fill="#a9b06e" opacity="0.33"/><rect x="894" y="207" width="2" height="4" fill="#b9ad6c" opacity="0.46"/><rect x="866" y="247" width="8" height="6" fill="#d8d890" opacity="0.53"/><rect x="851" y="203" width="8" height="9" fill="#d4c282" opacity="0.58"/><rect x="807" y="137" width="4" height="5" fill="#d8d890" opacity="0.53"/><rect x="771" y="89" width="4" height="4" fill="#b8c888" opacity="0.40"/><rect x="883" y="90" width="3" height="4" fill="#a8c078" opacity="0.56"/><rect x="849" y="85" width="6" height="6" fill="#d8d890" opacity="0.44"/><rect x="759" y="181" width="2" height="8" fill="#d8d890" opacity="0.25"/><rect x="785" y="270" width="6" height="4" fill="#d8d890" opacity="0.35"/><rect x="800" y="76" width="5" height="8" fill="#d4c282" opacity="0.63"/><rect x="888" y="331" width="8" height="2" fill="#a8c078" opacity="0.52"/><rect x="841" y="90" width="6" height="4" fill="#d8d890" opacity="0.33"/><rect x="769" y="156" width="7" height="6" fill="#c9bb7a" opacity="0.59"/><rect x="790" y="270" width="6" height="5" fill="#b9ad6c" opacity="0.46"/><rect x="857" y="82" width="5" height="4" fill="#b9ad6c" opacity="0.60"/><rect x="839" y="270" width="4" height="4" fill="#c8b473" opacity="0.53"/><rect x="765" y="195" width="3" height="4" fill="#d8d890" opacity="0.56"/><rect x="860" y="113" width="3" height="4" fill="#b8c888" opacity="0.30"/><rect x="727" y="152" width="6" height="8" fill="#a9b06e" opacity="0.28"/><rect x="846" y="236" width="3" height="5" fill="#b9ad6c" opacity="0.61"/><rect x="824" y="79" width="8" height="8" fill="#c9bb7a" opacity="0.28"/><rect x="839" y="71" width="6" height="9" fill="#b9ad6c" opacity="0.45"/><rect x="787" y="307" width="7" height="4" fill="#a8c078" opacity="0.33"/><rect x="816" y="242" width="8" height="9" fill="#d8d890" opacity="0.45"/><rect x="854" y="140" width="4" height="3" fill="#b8c888" opacity="0.65"/><rect x="766" y="193" width="6" height="6" fill="#c8b473" opacity="0.47"/><rect x="781" y="199" width="5" height="5" fill="#c9bb7a" opacity="0.38"/><rect x="829" y="304" width="8" height="2" fill="#a9b06e" opacity="0.29"/><rect x="852" y="199" width="4" height="9" fill="#d8d890" opacity="0.45"/><rect x="725" y="147" width="6" height="4" fill="#b8c888" opacity="0.55"/><rect x="788" y="216" width="5" height="8" fill="#c9bb7a" opacity="0.41"/><rect x="804" y="150" width="4" height="3" fill="#a9b06e" opacity="0.39"/><rect x="856" y="323" width="3" height="4" fill="#a9b06e" opacity="0.58"/><rect x="772" y="226" width="8" height="5" fill="#b9ad6c" opacity="0.62"/><rect x="775" y="165" width="4" height="2" fill="#d4c282" opacity="0.37"/><rect x="897" y="216" width="3" height="9" fill="#b9ad6c" opacity="0.64"/><rect x="825" y="194" width="7" height="6" fill="#d4c282" opacity="0.68"/><rect x="767" y="299" width="3" height="3" fill="#a8c078" opacity="0.47"/><rect x="826" y="252" width="3" height="4" fill="#b8c888" opacity="0.29"/><rect x="767" y="218" width="6" height="4" fill="#a8c078" opacity="0.45"/><rect x="802" y="299" width="6" height="5" fill="#c8b473" opacity="0.52"/><rect x="855" y="322" width="4" height="4" fill="#b8c888" opacity="0.55"/><rect x="750" y="115" width="3" height="4" fill="#c8b473" opacity="0.43"/><rect x="846" y="194" width="2" height="4" fill="#b8c888" opacity="0.57"/><rect x="849" y="190" width="4" height="5" fill="#a9b06e" opacity="0.44"/><rect x="820" y="242" width="4" height="4" fill="#b9ad6c" opacity="0.28"/><rect x="865" y="227" width="4" height="9" fill="#b9ad6c" opacity="0.46"/><rect x="777" y="176" width="4" height="9" fill="#d8d890" opacity="0.29"/><rect x="729" y="184" width="5" height="5" fill="#c8b473" opacity="0.29"/><rect x="895" y="292" width="2" height="5" fill="#c8b473" opacity="0.59"/><rect x="754" y="207" width="7" height="5" fill="#d4c282" opacity="0.70"/><rect x="800" y="286" width="3" height="9" fill="#c9bb7a" opacity="0.43"/><rect x="780" y="96" width="3" height="6" fill="#a8c078" opacity="0.56"/><rect x="774" y="321" width="8" height="2" fill="#d8d890" opacity="0.29"/><rect x="767" y="99" width="6" height="2" fill="#d8d890" opacity="0.44"/><rect x="756" y="165" width="7" height="9" fill="#c8b473" opacity="0.34"/><rect x="821" y="317" width="7" height="9" fill="#b9ad6c" opacity="0.26"/><rect x="835" y="282" width="3" height="5" fill="#c8b473" opacity="0.50"/><rect x="739" y="334" width="3" height="9" fill="#b9ad6c" opacity="0.54"/><rect x="750" y="318" width="4" height="5" fill="#a8c078" opacity="0.63"/><rect x="898" y="133" width="8" height="4" fill="#a8c078" opacity="0.34"/><rect x="830" y="268" width="3" height="3" fill="#b8c888" opacity="0.60"/><rect x="876" y="159" width="8" height="5" fill="#c8b473" opacity="0.38"/><rect x="776" y="225" width="7" height="4" fill="#d8d890" opacity="0.49"/><rect x="784" y="216" width="8" height="8" fill="#d8d890" opacity="0.67"/><rect x="879" y="331" width="4" height="8" fill="#a9b06e" opacity="0.64"/><rect x="796" y="153" width="7" height="8" fill="#a8c078" opacity="0.69"/><rect x="865" y="243" width="3" height="9" fill="#c8b473" opacity="0.31"/><rect x="896" y="157" width="3" height="9" fill="#b9ad6c" opacity="0.49"/><rect x="804" y="262" width="6" height="4" fill="#b9ad6c" opacity="0.46"/><rect x="896" y="159" width="6" height="3" fill="#c9bb7a" opacity="0.63"/><rect x="877" y="170" width="5" height="9" fill="#c8b473" opacity="0.53"/><rect x="764" y="251" width="4" height="4" fill="#b9ad6c" opacity="0.45"/><rect x="740" y="238" width="3" height="9" fill="#d4c282" opacity="0.56"/><rect x="885" y="80" width="2" height="5" fill="#c9bb7a" opacity="0.42"/><rect x="748" y="210" width="3" height="4" fill="#d4c282" opacity="0.29"/><rect x="879" y="234" width="4" height="9" fill="#d4c282" opacity="0.35"/><rect x="837" y="191" width="2" height="9" fill="#b8c888" opacity="0.55"/><rect x="750" y="186" width="5" height="5" fill="#a8c078" opacity="0.56"/><rect x="804" y="149" width="6" height="9" fill="#b9ad6c" opacity="0.36"/><rect x="825" y="222" width="4" height="2" fill="#a8c078" opacity="0.37"/><rect x="824" y="252" width="2" height="9" fill="#b8c888" opacity="0.60"/><rect x="763" y="283" width="4" height="4" fill="#b8c888" opacity="0.55"/><rect x="852" y="245" width="3" height="3" fill="#c8b473" opacity="0.39"/><rect x="801" y="223" width="3" height="3" fill="#b8c888" opacity="0.40"/><rect x="797" y="122" width="8" height="6" fill="#b8c888" opacity="0.62"/><rect x="768" y="289" width="7" height="5" fill="#c9bb7a" opacity="0.61"/><rect x="806" y="88" width="4" height="8" fill="#c9bb7a" opacity="0.29"/><rect x="793" y="139" width="3" height="9" fill="#c9bb7a" opacity="0.55"/><rect x="843" y="225" width="5" height="3" fill="#a9b06e" opacity="0.46"/><rect x="834" y="321" width="5" height="4" fill="#b9ad6c" opacity="0.54"/><rect x="806" y="256" width="6" height="3" fill="#d4c282" opacity="0.27"/><rect x="729" y="335" width="3" height="3" fill="#a9b06e" opacity="0.65"/><rect x="746" y="190" width="8" height="8" fill="#d4c282" opacity="0.65"/><rect x="840" y="291" width="6" height="5" fill="#c8b473" opacity="0.56"/><rect x="761" y="187" width="4" height="6" fill="#b9ad6c" opacity="0.69"/><rect x="788" y="310" width="5" height="2" fill="#a8c078" opacity="0.37"/><rect x="896" y="322" width="7" height="3" fill="#a9b06e" opacity="0.54"/><rect x="829" y="74" width="5" height="4" fill="#d4c282" opacity="0.60"/><rect x="759" y="290" width="8" height="4" fill="#a9b06e" opacity="0.62"/><rect x="764" y="276" width="2" height="5" fill="#d4c282" opacity="0.69"/><rect x="819" y="282" width="3" height="2" fill="#d4c282" opacity="0.26"/><rect x="864" y="132" width="5" height="2" fill="#d4c282" opacity="0.37"/><rect x="745" y="181" width="3" height="3" fill="#d8d890" opacity="0.45"/><rect x="787" y="227" width="7" height="4" fill="#c8b473" opacity="0.58"/><rect x="886" y="245" width="4" height="9" fill="#c8b473" opacity="0.28"/><rect x="808" y="176" width="3" height="9" fill="#d8d890" opacity="0.28"/><rect x="737" y="231" width="3" height="4" fill="#b8c888" opacity="0.53"/><rect x="827" y="259" width="6" height="5" fill="#d8d890" opacity="0.48"/><rect x="799" y="281" width="3" height="4" fill="#a8c078" opacity="0.45"/><rect x="763" y="159" width="7" height="8" fill="#a8c078" opacity="0.58"/><rect x="778" y="152" width="4" height="6" fill="#d4c282" opacity="0.56"/><rect x="807" y="92" width="3" height="3" fill="#a8c078" opacity="0.29"/><rect x="855" y="286" width="8" height="2" fill="#c9bb7a" opacity="0.55"/><rect x="796" y="302" width="6" height="2" fill="#b8c888" opacity="0.52"/><rect x="785" y="223" width="4" height="4" fill="#d8d890" opacity="0.35"/><rect x="741" y="295" width="5" height="3" fill="#b8c888" opacity="0.51"/><rect x="867" y="295" width="8" height="2" fill="#b8c888" opacity="0.26"/><rect x="771" y="272" width="5" height="6" fill="#c8b473" opacity="0.33"/><rect x="748" y="244" width="3" height="4" fill="#c8b473" opacity="0.29"/><rect x="817" y="169" width="7" height="6" fill="#d4c282" opacity="0.42"/><rect x="852" y="276" width="3" height="2" fill="#d4c282" opacity="0.32"/><rect x="833" y="249" width="4" height="9" fill="#a8c078" opacity="0.47"/><rect x="802" y="141" width="8" height="3" fill="#c9bb7a" opacity="0.44"/><rect x="773" y="250" width="7" height="5" fill="#c8b473" opacity="0.35"/><rect x="899" y="83" width="4" height="5" fill="#a9b06e" opacity="0.60"/><rect x="860" y="146" width="3" height="2" fill="#d8d890" opacity="0.59"/><rect x="754" y="170" width="4" height="6" fill="#b9ad6c" opacity="0.43"/><rect x="856" y="185" width="7" height="3" fill="#c9bb7a" opacity="0.51"/><rect x="825" y="258" width="6" height="5" fill="#b9ad6c" opacity="0.43"/><rect x="896" y="114" width="7" height="6" fill="#b9ad6c" opacity="0.45"/><rect x="741" y="185" width="6" height="3" fill="#a8c078" opacity="0.64"/><rect x="856" y="127" width="3" height="3" fill="#b9ad6c" opacity="0.49"/><rect x="757" y="276" width="5" height="4" fill="#a9b06e" opacity="0.30"/><rect x="768" y="114" width="3" height="3" fill="#d4c282" opacity="0.68"/><rect x="835" y="192" width="7" height="6" fill="#c9bb7a" opacity="0.32"/><rect x="734" y="187" width="4" height="5" fill="#c8b473" opacity="0.41"/><rect x="735" y="192" width="2" height="2" fill="#c9bb7a" opacity="0.62"/><rect x="736" y="300" width="3" height="8" fill="#d8d890" opacity="0.51"/><rect x="894" y="266" width="2" height="9" fill="#a9b06e" opacity="0.39"/><rect x="808" y="108" width="2" height="9" fill="#b9ad6c" opacity="0.61"/><rect x="873" y="331" width="3" height="4" fill="#c8b473" opacity="0.36"/><rect x="801" y="186" width="8" height="4" fill="#c9bb7a" opacity="0.42"/><rect x="773" y="178" width="5" height="2" fill="#c9bb7a" opacity="0.28"/><rect x="739" y="250" width="4" height="5" fill="#d4c282" opacity="0.40"/><rect x="827" y="106" width="5" height="5" fill="#a8c078" opacity="0.31"/><rect x="850" y="91" width="8" height="8" fill="#c9bb7a" opacity="0.62"/><rect x="843" y="290" width="8" height="3" fill="#a8c078" opacity="0.48"/><rect x="725" y="151" width="4" height="6" fill="#d8d890" opacity="0.34"/><rect x="902" y="110" width="4" height="3" fill="#c8b473" opacity="0.55"/><rect x="880" y="234" width="6" height="4" fill="#d4c282" opacity="0.33"/><rect x="847" y="235" width="3" height="9" fill="#c8b473" opacity="0.43"/><rect x="844" y="132" width="7" height="5" fill="#d8d890" opacity="0.36"/><rect x="765" y="327" width="7" height="4" fill="#c9bb7a" opacity="0.56"/><rect x="825" y="186" width="4" height="8" fill="#a8c078" opacity="0.68"/><rect x="869" y="283" width="3" height="5" fill="#c8b473" opacity="0.54"/><rect x="879" y="217" width="3" height="3" fill="#b8c888" opacity="0.29"/><rect x="751" y="188" width="8" height="4" fill="#a8c078" opacity="0.29"/><rect x="886" y="287" width="5" height="2" fill="#a8c078" opacity="0.27"/><rect x="812" y="131" width="3" height="6" fill="#a9b06e" opacity="0.26"/><rect x="890" y="293" width="5" height="4" fill="#d4c282" opacity="0.27"/><rect x="887" y="195" width="3" height="9" fill="#d8d890" opacity="0.53"/><rect x="885" y="73" width="4" height="4" fill="#a8c078" opacity="0.30"/><rect x="774" y="149" width="2" height="4" fill="#a8c078" opacity="0.54"/><rect x="834" y="85" width="7" height="2" fill="#a9b06e" opacity="0.57"/><rect x="774" y="68" width="5" height="4" fill="#a8c078" opacity="0.33"/><rect x="842" y="208" width="5" height="3" fill="#c8b473" opacity="0.43"/><rect x="807" y="238" width="5" height="5" fill="#c8b473" opacity="0.41"/><rect x="734" y="133" width="3" height="6" fill="#d4c282" opacity="0.27"/><rect x="820" y="286" width="3" height="9" fill="#d8d890" opacity="0.53"/><rect x="868" y="85" width="7" height="2" fill="#b8c888" opacity="0.34"/><rect x="864" y="305" width="5" height="5" fill="#a8c078" opacity="0.70"/><rect x="820" y="136" width="4" height="5" fill="#c9bb7a" opacity="0.64"/><rect x="731" y="244" width="4" height="3" fill="#c9bb7a" opacity="0.45"/><rect x="794" y="186" width="6" height="6" fill="#d4c282" opacity="0.47"/><rect x="812" y="316" width="8" height="5" fill="#b9ad6c" opacity="0.58"/><rect x="736" y="229" width="3" height="5" fill="#c9bb7a" opacity="0.30"/><rect x="781" y="147" width="7" height="8" fill="#d4c282" opacity="0.56"/><rect x="785" y="79" width="5" height="8" fill="#b8c888" opacity="0.54"/><rect x="864" y="83" width="6" height="6" fill="#d4c282" opacity="0.68"/><rect x="748" y="231" width="7" height="2" fill="#d4c282" opacity="0.28"/><rect x="862" y="166" width="6" height="2" fill="#d4c282" opacity="0.56"/><rect x="893" y="168" width="3" height="4" fill="#c9bb7a" opacity="0.43"/><rect x="839" y="135" width="3" height="2" fill="#d4c282" opacity="0.47"/><rect x="792" y="219" width="4" height="5" fill="#d8d890" opacity="0.35"/><rect x="832" y="254" width="7" height="4" fill="#b9ad6c" opacity="0.31"/><rect x="735" y="114" width="7" height="3" fill="#c9bb7a" opacity="0.55"/><rect x="850" y="215" width="4" height="5" fill="#d4c282" opacity="0.57"/><rect x="889" y="239" width="5" height="4" fill="#b9ad6c" opacity="0.69"/><rect x="865" y="131" width="7" height="2" fill="#c9bb7a" opacity="0.50"/><rect x="788" y="283" width="8" height="4" fill="#b9ad6c" opacity="0.28"/><rect x="794" y="260" width="7" height="8" fill="#a8c078" opacity="0.62"/><rect x="735" y="329" width="3" height="9" fill="#d8d890" opacity="0.56"/><rect x="784" y="303" width="8" height="4" fill="#d4c282" opacity="0.44"/><rect x="886" y="83" width="3" height="4" fill="#b8c888" opacity="0.32"/><rect x="780" y="258" width="5" height="5" fill="#b9ad6c" opacity="0.36"/><rect x="836" y="216" width="3" height="5" fill="#b9ad6c" opacity="0.48"/><rect x="752" y="320" width="3" height="4" fill="#c9bb7a" opacity="0.63"/><rect x="823" y="289" width="2" height="3" fill="#c8b473" opacity="0.68"/><rect x="861" y="139" width="4" height="8" fill="#c8b473" opacity="0.47"/><rect x="835" y="146" width="4" height="9" fill="#a9b06e" opacity="0.61"/><rect x="845" y="148" width="3" height="2" fill="#d4c282" opacity="0.45"/><rect x="809" y="123" width="3" height="6" fill="#c9bb7a" opacity="0.58"/><rect x="877" y="329" width="3" height="6" fill="#b9ad6c" opacity="0.39"/><rect x="806" y="140" width="4" height="4" fill="#b9ad6c" opacity="0.27"/><rect x="892" y="300" width="6" height="4" fill="#d4c282" opacity="0.62"/><rect x="890" y="261" width="4" height="4" fill="#d8d890" opacity="0.70"/><rect x="806" y="304" width="7" height="2" fill="#b9ad6c" opacity="0.68"/><rect x="813" y="327" width="4" height="6" fill="#c8b473" opacity="0.27"/><rect x="811" y="304" width="7" height="5" fill="#c8b473" opacity="0.63"/><rect x="800" y="304" width="5" height="8" fill="#c9bb7a" opacity="0.27"/><rect x="731" y="219" width="5" height="5" fill="#b9ad6c" opacity="0.42"/><rect x="803" y="215" width="3" height="4" fill="#b9ad6c" opacity="0.43"/><rect x="865" y="159" width="5" height="4" fill="#a9b06e" opacity="0.52"/><rect x="794" y="79" width="2" height="4" fill="#c9bb7a" opacity="0.61"/><rect x="815" y="108" width="8" height="4" fill="#c9bb7a" opacity="0.67"/><rect x="779" y="173" width="4" height="6" fill="#d8d890" opacity="0.57"/><rect x="776" y="287" width="5" height="6" fill="#b9ad6c" opacity="0.69"/><rect x="827" y="282" width="2" height="9" fill="#b8c888" opacity="0.69"/><rect x="863" y="276" width="4" height="2" fill="#d8d890" opacity="0.33"/><rect x="835" y="234" width="6" height="4" fill="#a9b06e" opacity="0.26"/><rect x="893" y="97" width="2" height="9" fill="#c9bb7a" opacity="0.44"/><rect x="796" y="123" width="8" height="9" fill="#c8b473" opacity="0.57"/><rect x="815" y="218" width="7" height="8" fill="#c9bb7a" opacity="0.68"/><rect x="805" y="211" width="8" height="6" fill="#b8c888" opacity="0.52"/><rect x="757" y="134" width="8" height="5" fill="#a9b06e" opacity="0.67"/><rect x="899" y="275" width="4" height="9" fill="#c9bb7a" opacity="0.47"/><rect x="823" y="318" width="4" height="5" fill="#b9ad6c" opacity="0.51"/><rect x="820" y="308" width="6" height="6" fill="#d4c282" opacity="0.38"/><rect x="774" y="259" width="5" height="9" fill="#b8c888" opacity="0.59"/><rect x="761" y="290" width="4" height="5" fill="#d4c282" opacity="0.30"/><rect x="855" y="132" width="2" height="4" fill="#a9b06e" opacity="0.27"/><rect x="796" y="260" width="3" height="4" fill="#c8b473" opacity="0.68"/><rect x="898" y="110" width="7" height="9" fill="#a9b06e" opacity="0.59"/><rect x="774" y="144" width="2" height="3" fill="#a9b06e" opacity="0.49"/><rect x="852" y="319" width="3" height="8" fill="#d4c282" opacity="0.67"/><rect x="729" y="292" width="7" height="4" fill="#b8c888" opacity="0.64"/><rect x="724" y="220" width="3" height="6" fill="#b8c888" opacity="0.45"/><rect x="837" y="209" width="3" height="9" fill="#b8c888" opacity="0.34"/><rect x="742" y="112" width="7" height="5" fill="#d4c282" opacity="0.26"/><rect x="783" y="147" width="4" height="4" fill="#a8c078" opacity="0.62"/><rect x="815" y="91" width="3" height="4" fill="#d4c282" opacity="0.46"/><rect x="890" y="70" width="6" height="4" fill="#d8d890" opacity="0.59"/><rect x="894" y="149" width="2" height="5" fill="#c9bb7a" opacity="0.56"/><rect x="733" y="100" width="4" height="4" fill="#a8c078" opacity="0.56"/><rect x="888" y="306" width="4" height="3" fill="#b8c888" opacity="0.42"/><rect x="762" y="325" width="7" height="4" fill="#d8d890" opacity="0.59"/><rect x="831" y="179" width="8" height="9" fill="#a9b06e" opacity="0.59"/><rect x="844" y="228" width="3" height="9" fill="#c9bb7a" opacity="0.29"/><rect x="824" y="85" width="8" height="4" fill="#d4c282" opacity="0.32"/><rect x="876" y="186" width="4" height="9" fill="#b9ad6c" opacity="0.65"/><rect x="802" y="83" width="3" height="8" fill="#d8d890" opacity="0.50"/><rect x="823" y="248" width="4" height="2" fill="#a8c078" opacity="0.36"/><rect x="723" y="126" width="3" height="2" fill="#a8c078" opacity="0.41"/><rect x="733" y="334" width="3" height="9" fill="#c8b473" opacity="0.38"/><rect x="754" y="104" width="6" height="6" fill="#a8c078" opacity="0.45"/><rect x="887" y="169" width="3" height="4" fill="#c9bb7a" opacity="0.30"/><rect x="901" y="173" width="3" height="4" fill="#c8b473" opacity="0.59"/><rect x="898" y="192" width="8" height="8" fill="#a8c078" opacity="0.62"/><rect x="767" y="161" width="4" height="4" fill="#b9ad6c" opacity="0.26"/><rect x="841" y="233" width="2" height="4" fill="#a9b06e" opacity="0.28"/><rect x="829" y="188" width="2" height="4" fill="#c8b473" opacity="0.43"/><rect x="764" y="126" width="2" height="4" fill="#b8c888" opacity="0.36"/><rect x="887" y="222" width="5" height="4" fill="#b8c888" opacity="0.64"/><rect x="899" y="208" width="6" height="5" fill="#b8c888" opacity="0.28"/><rect x="893" y="304" width="3" height="8" fill="#d8d890" opacity="0.27"/><rect x="784" y="240" width="6" height="6" fill="#a8c078" opacity="0.43"/><rect x="776" y="117" width="8" height="9" fill="#a9b06e" opacity="0.63"/><rect x="776" y="258" width="7" height="2" fill="#a8c078" opacity="0.69"/><rect x="822" y="104" width="4" height="5" fill="#a9b06e" opacity="0.40"/><rect x="736" y="189" width="5" height="3" fill="#a9b06e" opacity="0.27"/><rect x="790" y="230" width="2" height="3" fill="#a9b06e" opacity="0.61"/><rect x="828" y="248" width="4" height="9" fill="#a9b06e" opacity="0.64"/><rect x="782" y="324" width="2" height="4" fill="#a9b06e" opacity="0.68"/><rect x="743" y="336" width="7" height="4" fill="#a9b06e" opacity="0.43"/><rect x="765" y="154" width="4" height="8" fill="#d8d890" opacity="0.49"/><rect x="787" y="138" width="8" height="9" fill="#d8d890" opacity="0.29"/><rect x="899" y="194" width="5" height="4" fill="#c9bb7a" opacity="0.39"/><rect x="730" y="300" width="3" height="2" fill="#b8c888" opacity="0.50"/><rect x="827" y="261" width="4" height="4" fill="#a9b06e" opacity="0.40"/><rect x="790" y="291" width="7" height="6" fill="#b8c888" opacity="0.59"/><rect x="810" y="262" width="7" height="9" fill="#d4c282" opacity="0.58"/><rect x="785" y="106" width="8" height="9" fill="#d4c282" opacity="0.66"/><rect x="820" y="240" width="2" height="2" fill="#b9ad6c" opacity="0.68"/><rect x="842" y="273" width="6" height="4" fill="#a9b06e" opacity="0.28"/><rect x="749" y="127" width="7" height="6" fill="#c8b473" opacity="0.53"/><rect x="842" y="233" width="7" height="9" fill="#c8b473" opacity="0.25"/><rect x="821" y="71" width="8" height="5" fill="#b8c888" opacity="0.26"/><rect x="868" y="249" width="3" height="3" fill="#b9ad6c" opacity="0.49"/><rect x="765" y="234" width="4" height="6" fill="#b8c888" opacity="0.61"/><rect x="736" y="325" width="7" height="4" fill="#a9b06e" opacity="0.38"/><rect x="871" y="90" width="2" height="3" fill="#a8c078" opacity="0.42"/><rect x="821" y="83" width="2" height="4" fill="#b9ad6c" opacity="0.47"/><rect x="800" y="278" width="3" height="2" fill="#a9b06e" opacity="0.35"/><rect x="878" y="306" width="7" height="5" fill="#c8b473" opacity="0.67"/><rect x="845" y="143" width="8" height="2" fill="#d4c282" opacity="0.67"/><rect x="779" y="326" width="3" height="8" fill="#b9ad6c" opacity="0.38"/><rect x="824" y="220" width="6" height="6" fill="#a8c078" opacity="0.59"/><rect x="747" y="333" width="3" height="6" fill="#c8b473" opacity="0.29"/><rect x="764" y="88" width="6" height="6" fill="#c8b473" opacity="0.54"/><rect x="863" y="189" width="4" height="6" fill="#a8c078" opacity="0.44"/><rect x="844" y="245" width="3" height="5" fill="#a9b06e" opacity="0.57"/><rect x="737" y="109" width="3" height="8" fill="#c9bb7a" opacity="0.41"/><rect x="738" y="321" width="7" height="6" fill="#b8c888" opacity="0.30"/><rect x="738" y="184" width="8" height="8" fill="#b9ad6c" opacity="0.26"/><rect x="786" y="93" width="5" height="8" fill="#c8b473" opacity="0.38"/><rect x="792" y="91" width="8" height="4" fill="#d4c282" opacity="0.56"/><rect x="753" y="140" width="4" height="9" fill="#d4c282" opacity="0.28"/><rect x="800" y="181" width="7" height="3" fill="#c9bb7a" opacity="0.36"/><rect x="766" y="236" width="4" height="9" fill="#b9ad6c" opacity="0.31"/><rect x="723" y="174" width="6" height="6" fill="#d8d890" opacity="0.40"/><rect x="869" y="298" width="3" height="5" fill="#c9bb7a" opacity="0.52"/><rect x="847" y="196" width="3" height="8" fill="#c9bb7a" opacity="0.38"/><rect x="847" y="200" width="4" height="6" fill="#a8c078" opacity="0.38"/><rect x="863" y="166" width="4" height="4" fill="#c8b473" opacity="0.68"/><rect x="805" y="258" width="7" height="5" fill="#b9ad6c" opacity="0.62"/><rect x="865" y="178" width="7" height="4" fill="#b8c888" opacity="0.36"/><rect x="841" y="260" width="6" height="3" fill="#d8d890" opacity="0.70"/><rect x="808" y="175" width="8" height="8" fill="#c8b473" opacity="0.61"/><rect x="787" y="308" width="8" height="3" fill="#b9ad6c" opacity="0.60"/><rect x="840" y="163" width="2" height="8" fill="#c9bb7a" opacity="0.68"/><rect x="799" y="71" width="4" height="4" fill="#a9b06e" opacity="0.45"/><rect x="792" y="275" width="8" height="4" fill="#c9bb7a" opacity="0.70"/><rect x="809" y="147" width="3" height="3" fill="#d4c282" opacity="0.41"/><rect x="784" y="278" width="8" height="9" fill="#c9bb7a" opacity="0.46"/><rect x="801" y="255" width="5" height="3" fill="#b8c888" opacity="0.27"/><rect x="850" y="74" width="5" height="3" fill="#d4c282" opacity="0.67"/><rect x="855" y="206" width="8" height="4" fill="#c9bb7a" opacity="0.50"/><rect x="895" y="130" width="6" height="4" fill="#d4c282" opacity="0.54"/><rect x="800" y="76" width="4" height="9" fill="#a8c078" opacity="0.42"/><rect x="849" y="123" width="3" height="3" fill="#d4c282" opacity="0.41"/><rect x="757" y="99" width="7" height="6" fill="#a8c078" opacity="0.53"/><rect x="828" y="161" width="7" height="4" fill="#b8c888" opacity="0.66"/><rect x="828" y="248" width="5" height="3" fill="#a9b06e" opacity="0.39"/><rect x="755" y="254" width="8" height="8" fill="#a8c078" opacity="0.52"/><rect x="825" y="181" width="7" height="4" fill="#d4c282" opacity="0.47"/><rect x="747" y="152" width="7" height="2" fill="#c9bb7a" opacity="0.68"/><rect x="809" y="120" width="6" height="9" fill="#a8c078" opacity="0.56"/><rect x="797" y="293" width="7" height="4" fill="#b9ad6c" opacity="0.50"/><rect x="865" y="127" width="2" height="5" fill="#a9b06e" opacity="0.49"/><rect x="752" y="191" width="7" height="3" fill="#b9ad6c" opacity="0.37"/><rect x="820" y="334" width="8" height="2" fill="#d8d890" opacity="0.50"/><rect x="900" y="95" width="4" height="5" fill="#c8b473" opacity="0.45"/><rect x="785" y="287" width="7" height="3" fill="#a9b06e" opacity="0.34"/><rect x="855" y="253" width="6" height="4" fill="#d4c282" opacity="0.60"/><rect x="868" y="284" width="5" height="5" fill="#d4c282" opacity="0.40"/><rect x="849" y="146" width="4" height="3" fill="#d4c282" opacity="0.68"/><rect x="863" y="314" width="4" height="4" fill="#d4c282" opacity="0.36"/><rect x="850" y="290" width="6" height="9" fill="#d4c282" opacity="0.51"/><rect x="770" y="179" width="7" height="3" fill="#b9ad6c" opacity="0.43"/><rect x="857" y="254" width="5" height="9" fill="#d8d890" opacity="0.40"/><rect x="722" y="275" width="3" height="9" fill="#c9bb7a" opacity="0.63"/><rect x="865" y="175" width="6" height="4" fill="#d8d890" opacity="0.37"/><rect x="871" y="159" width="3" height="9" fill="#c9bb7a" opacity="0.65"/><rect x="859" y="80" width="7" height="2" fill="#b9ad6c" opacity="0.67"/><rect x="750" y="190" width="6" height="4" fill="#d4c282" opacity="0.65"/><rect x="776" y="302" width="4" height="3" fill="#c9bb7a" opacity="0.36"/><rect x="789" y="310" width="3" height="2" fill="#a8c078" opacity="0.53"/><rect x="853" y="270" width="6" height="3" fill="#b9ad6c" opacity="0.25"/><rect x="808" y="104" width="4" height="9" fill="#c8b473" opacity="0.25"/><rect x="784" y="100" width="6" height="4" fill="#d8d890" opacity="0.28"/><rect x="791" y="264" width="3" height="3" fill="#c9bb7a" opacity="0.42"/><rect x="776" y="171" width="3" height="4" fill="#b9ad6c" opacity="0.49"/><rect x="724" y="242" width="7" height="6" fill="#a9b06e" opacity="0.53"/><rect x="749" y="178" width="7" height="4" fill="#b9ad6c" opacity="0.65"/><rect x="747" y="101" width="6" height="6" fill="#a8c078" opacity="0.39"/><rect x="747" y="142" width="3" height="4" fill="#b8c888" opacity="0.60"/><rect x="846" y="295" width="4" height="4" fill="#a9b06e" opacity="0.59"/><rect x="775" y="83" width="4" height="9" fill="#a8c078" opacity="0.30"/><rect x="812" y="227" width="8" height="2" fill="#c9bb7a" opacity="0.67"/><rect x="746" y="299" width="6" height="6" fill="#d4c282" opacity="0.59"/><rect x="894" y="274" width="2" height="3" fill="#c8b473" opacity="0.37"/><rect x="729" y="84" width="6" height="5" fill="#a8c078" opacity="0.44"/><rect x="794" y="240" width="8" height="4" fill="#b8c888" opacity="0.29"/><rect x="736" y="315" width="3" height="6" fill="#a8c078" opacity="0.51"/><rect x="859" y="242" width="3" height="5" fill="#a8c078" opacity="0.58"/><rect x="874" y="84" width="3" height="8" fill="#b9ad6c" opacity="0.45"/><rect x="832" y="151" width="3" height="3" fill="#c8b473" opacity="0.57"/><rect x="848" y="112" width="5" height="5" fill="#d4c282" opacity="0.42"/><rect x="857" y="302" width="3" height="2" fill="#c9bb7a" opacity="0.61"/><rect x="771" y="85" width="3" height="9" fill="#d8d890" opacity="0.48"/><rect x="732" y="298" width="3" height="6" fill="#d4c282" opacity="0.36"/><rect x="741" y="222" width="3" height="4" fill="#c8b473" opacity="0.27"/><rect x="877" y="134" width="7" height="6" fill="#a8c078" opacity="0.66"/><rect x="754" y="325" width="2" height="8" fill="#a9b06e" opacity="0.39"/><rect x="797" y="261" width="4" height="3" fill="#c9bb7a" opacity="0.30"/><rect x="843" y="82" width="4" height="2" fill="#a8c078" opacity="0.28"/><rect x="806" y="144" width="4" height="6" fill="#b9ad6c" opacity="0.50"/><rect x="723" y="122" width="4" height="4" fill="#d8d890" opacity="0.42"/><rect x="897" y="335" width="4" height="4" fill="#d4c282" opacity="0.25"/><rect x="796" y="130" width="5" height="2" fill="#c9bb7a" opacity="0.25"/><rect x="840" y="296" width="4" height="3" fill="#a9b06e" opacity="0.49"/><rect x="765" y="200" width="2" height="4" fill="#b8c888" opacity="0.29"/><rect x="888" y="308" width="8" height="8" fill="#c9bb7a" opacity="0.46"/><rect x="857" y="224" width="8" height="4" fill="#a8c078" opacity="0.28"/><rect x="824" y="185" width="3" height="4" fill="#b8c888" opacity="0.37"/><rect x="779" y="283" width="5" height="6" fill="#d8d890" opacity="0.37"/><rect x="735" y="122" width="3" height="4" fill="#b9ad6c" opacity="0.32"/><rect x="806" y="177" width="8" height="6" fill="#a9b06e" opacity="0.45"/><rect x="805" y="296" width="3" height="4" fill="#b8c888" opacity="0.62"/><rect x="847" y="79" width="5" height="4" fill="#b9ad6c" opacity="0.57"/><rect x="896" y="174" width="2" height="5" fill="#b8c888" opacity="0.62"/><rect x="753" y="323" width="7" height="4" fill="#b9ad6c" opacity="0.46"/><rect x="867" y="105" width="2" height="2" fill="#a9b06e" opacity="0.31"/><rect x="870" y="168" width="3" height="5" fill="#b9ad6c" opacity="0.26"/><rect x="734" y="310" width="7" height="4" fill="#b9ad6c" opacity="0.66"/><rect x="871" y="157" width="2" height="9" fill="#c8b473" opacity="0.33"/><rect x="825" y="288" width="6" height="9" fill="#c8b473" opacity="0.42"/><rect x="799" y="163" width="3" height="5" fill="#b8c888" opacity="0.45"/><rect x="749" y="233" width="4" height="5" fill="#d8d890" opacity="0.44"/><rect x="821" y="84" width="4" height="8" fill="#d4c282" opacity="0.44"/><rect x="838" y="282" width="4" height="2" fill="#a8c078" opacity="0.60"/><rect x="787" y="214" width="7" height="6" fill="#c9bb7a" opacity="0.42"/><rect x="754" y="153" width="4" height="2" fill="#b8c888" opacity="0.28"/><rect x="900" y="210" width="4" height="4" fill="#b9ad6c" opacity="0.36"/><rect x="765" y="211" width="2" height="4" fill="#a8c078" opacity="0.41"/><rect x="873" y="295" width="3" height="4" fill="#c9bb7a" opacity="0.61"/><rect x="848" y="313" width="2" height="6" fill="#d4c282" opacity="0.50"/><rect x="756" y="333" width="7" height="5" fill="#d4c282" opacity="0.47"/><rect x="738" y="130" width="4" height="2" fill="#d8d890" opacity="0.25"/><rect x="887" y="122" width="3" height="6" fill="#d4c282" opacity="0.66"/><rect x="874" y="155" width="2" height="4" fill="#d4c282" opacity="0.60"/><rect x="874" y="299" width="3" height="6" fill="#a8c078" opacity="0.51"/><rect x="783" y="154" width="3" height="8" fill="#d8d890" opacity="0.54"/><rect x="753" y="328" width="5" height="4" fill="#d4c282" opacity="0.42"/><rect x="854" y="147" width="3" height="2" fill="#a8c078" opacity="0.63"/><rect x="861" y="220" width="3" height="6" fill="#a9b06e" opacity="0.54"/><rect x="741" y="201" width="5" height="3" fill="#a9b06e" opacity="0.41"/><rect x="780" y="238" width="3" height="6" fill="#d8d890" opacity="0.26"/><rect x="760" y="254" width="5" height="5" fill="#b9ad6c" opacity="0.57"/><rect x="731" y="185" width="6" height="4" fill="#a8c078" opacity="0.47"/><rect x="790" y="214" width="3" height="9" fill="#a9b06e" opacity="0.32"/><rect x="735" y="295" width="4" height="2" fill="#c9bb7a" opacity="0.37"/><rect x="741" y="160" width="6" height="4" fill="#b9ad6c" opacity="0.50"/><rect x="884" y="93" width="7" height="2" fill="#a8c078" opacity="0.67"/><rect x="752" y="306" width="3" height="2" fill="#b9ad6c" opacity="0.40"/><rect x="897" y="178" width="8" height="5" fill="#b8c888" opacity="0.38"/><rect x="739" y="173" width="8" height="9" fill="#d4c282" opacity="0.27"/><rect x="723" y="91" width="7" height="4" fill="#b9ad6c" opacity="0.26"/><rect x="753" y="146" width="3" height="9" fill="#b9ad6c" opacity="0.39"/><rect x="794" y="199" width="4" height="3" fill="#a8c078" opacity="0.33"/><rect x="881" y="167" width="7" height="2" fill="#b8c888" opacity="0.45"/><rect x="769" y="292" width="2" height="4" fill="#b9ad6c" opacity="0.29"/><rect x="784" y="213" width="4" height="2" fill="#a8c078" opacity="0.62"/><rect x="797" y="212" width="7" height="4" fill="#d8d890" opacity="0.38"/><rect x="793" y="297" width="2" height="4" fill="#b9ad6c" opacity="0.68"/><rect x="803" y="322" width="3" height="4" fill="#a9b06e" opacity="0.31"/><rect x="798" y="333" width="6" height="4" fill="#d4c282" opacity="0.63"/><rect x="768" y="312" width="3" height="3" fill="#a8c078" opacity="0.50"/><rect x="821" y="298" width="8" height="9" fill="#c8b473" opacity="0.60"/><rect x="834" y="208" width="6" height="3" fill="#a8c078" opacity="0.32"/><rect x="824" y="224" width="3" height="3" fill="#b9ad6c" opacity="0.60"/><rect x="878" y="304" width="6" height="5" fill="#a8c078" opacity="0.54"/><rect x="825" y="195" width="3" height="5" fill="#a8c078" opacity="0.31"/><rect x="832" y="254" width="2" height="8" fill="#c9bb7a" opacity="0.56"/><rect x="731" y="195" width="4" height="6" fill="#c8b473" opacity="0.40"/><rect x="865" y="151" width="7" height="3" fill="#a9b06e" opacity="0.31"/><rect x="897" y="187" width="5" height="5" fill="#a8c078" opacity="0.52"/><rect x="738" y="186" width="6" height="9" fill="#c9bb7a" opacity="0.62"/><rect x="815" y="111" width="4" height="8" fill="#d4c282" opacity="0.60"/><rect x="816" y="220" width="3" height="4" fill="#a9b06e" opacity="0.63"/><rect x="767" y="190" width="5" height="4" fill="#b8c888" opacity="0.42"/><rect x="806" y="174" width="3" height="2" fill="#a9b06e" opacity="0.42"/><rect x="829" y="116" width="7" height="6" fill="#c9bb7a" opacity="0.32"/><rect x="883" y="269" width="3" height="5" fill="#c8b473" opacity="0.42"/><rect x="751" y="221" width="4" height="4" fill="#a9b06e" opacity="0.55"/><rect x="770" y="178" width="2" height="2" fill="#d8d890" opacity="0.66"/><rect x="839" y="229" width="2" height="4" fill="#b8c888" opacity="0.52"/><rect x="892" y="259" width="4" height="8" fill="#a8c078" opacity="0.63"/><rect x="805" y="126" width="4" height="8" fill="#b9ad6c" opacity="0.25"/><rect x="902" y="327" width="5" height="5" fill="#b8c888" opacity="0.56"/><rect x="809" y="158" width="4" height="6" fill="#b8c888" opacity="0.37"/><rect x="850" y="307" width="4" height="4" fill="#d4c282" opacity="0.48"/><rect x="765" y="83" width="6" height="6" fill="#d4c282" opacity="0.57"/><rect x="840" y="335" width="4" height="8" fill="#a8c078" opacity="0.42"/><rect x="728" y="258" width="4" height="6" fill="#a9b06e" opacity="0.56"/><rect x="837" y="195" width="5" height="5" fill="#d4c282" opacity="0.63"/><rect x="880" y="117" width="3" height="9" fill="#d4c282" opacity="0.58"/><rect x="853" y="218" width="3" height="6" fill="#b9ad6c" opacity="0.35"/><rect x="762" y="302" width="6" height="6" fill="#c9bb7a" opacity="0.37"/><rect x="775" y="296" width="7" height="2" fill="#b9ad6c" opacity="0.46"/><rect x="757" y="100" width="6" height="5" fill="#a8c078" opacity="0.27"/><rect x="876" y="105" width="4" height="6" fill="#a8c078" opacity="0.69"/><rect x="883" y="332" width="3" height="6" fill="#d4c282" opacity="0.60"/><rect x="810" y="237" width="3" height="6" fill="#c8b473" opacity="0.25"/><rect x="771" y="272" width="3" height="4" fill="#d8d890" opacity="0.60"/><rect x="862" y="103" width="6" height="8" fill="#a8c078" opacity="0.44"/><rect x="808" y="69" width="8" height="4" fill="#c9bb7a" opacity="0.68"/><rect x="883" y="271" width="8" height="4" fill="#c8b473" opacity="0.55"/><rect x="835" y="135" width="5" height="5" fill="#d4c282" opacity="0.30"/><rect x="813" y="150" width="3" height="2" fill="#b8c888" opacity="0.68"/><rect x="804" y="207" width="8" height="6" fill="#a8c078" opacity="0.65"/><rect x="901" y="160" width="7" height="6" fill="#a9b06e" opacity="0.32"/><rect x="885" y="286" width="2" height="4" fill="#a9b06e" opacity="0.58"/><rect x="746" y="265" width="8" height="4" fill="#b9ad6c" opacity="0.41"/><rect x="839" y="78" width="4" height="2" fill="#c8b473" opacity="0.55"/><rect x="840" y="73" width="3" height="8" fill="#d8d890" opacity="0.42"/><rect x="821" y="195" width="3" height="4" fill="#c8b473" opacity="0.39"/><rect x="841" y="246" width="4" height="4" fill="#a8c078" opacity="0.62"/><rect x="741" y="261" width="3" height="5" fill="#b9ad6c" opacity="0.60"/><rect x="812" y="231" width="4" height="4" fill="#c9bb7a" opacity="0.57"/><rect x="775" y="79" width="7" height="4" fill="#d8d890" opacity="0.40"/><rect x="722" y="248" width="3" height="9" fill="#d4c282" opacity="0.68"/><rect x="862" y="88" width="3" height="5" fill="#a9b06e" opacity="0.46"/><rect x="898" y="139" width="2" height="3" fill="#d4c282" opacity="0.64"/><rect x="875" y="165" width="5" height="8" fill="#b9ad6c" opacity="0.29"/><rect x="858" y="80" width="3" height="4" fill="#c9bb7a" opacity="0.41"/><rect x="801" y="235" width="3" height="6" fill="#c9bb7a" opacity="0.33"/><rect x="794" y="326" width="4" height="8" fill="#d8d890" opacity="0.61"/><rect x="839" y="282" width="3" height="4" fill="#c8b473" opacity="0.69"/><rect x="874" y="96" width="7" height="9" fill="#d4c282" opacity="0.53"/><rect x="862" y="232" width="3" height="9" fill="#d8d890" opacity="0.30"/><rect x="796" y="80" width="4" height="6" fill="#c8b473" opacity="0.57"/><rect x="844" y="274" width="4" height="6" fill="#b9ad6c" opacity="0.44"/><rect x="853" y="197" width="6" height="4" fill="#c8b473" opacity="0.26"/><rect x="890" y="203" width="7" height="9" fill="#d4c282" opacity="0.28"/><rect x="810" y="133" width="4" height="2" fill="#a9b06e" opacity="0.50"/><rect x="790" y="287" width="3" height="9" fill="#d8d890" opacity="0.61"/><rect x="803" y="298" width="7" height="6" fill="#b9ad6c" opacity="0.69"/><rect x="856" y="73" width="6" height="8" fill="#c8b473" opacity="0.50"/><rect x="722" y="92" width="4" height="4" fill="#d8d890" opacity="0.68"/><rect x="787" y="83" width="4" height="9" fill="#c9bb7a" opacity="0.50"/><rect x="834" y="195" width="5" height="9" fill="#b9ad6c" opacity="0.29"/><rect x="841" y="69" width="5" height="5" fill="#c9bb7a" opacity="0.57"/><rect x="730" y="112" width="3" height="8" fill="#b9ad6c" opacity="0.36"/><rect x="757" y="100" width="6" height="4" fill="#d8d890" opacity="0.62"/><rect x="756" y="159" width="6" height="2" fill="#b9ad6c" opacity="0.60"/><rect x="803" y="244" width="8" height="4" fill="#d8d890" opacity="0.25"/><rect x="855" y="216" width="6" height="9" fill="#d4c282" opacity="0.56"/><rect x="753" y="286" width="3" height="8" fill="#c9bb7a" opacity="0.48"/><rect x="791" y="331" width="4" height="5" fill="#a8c078" opacity="0.68"/><rect x="897" y="189" width="3" height="4" fill="#a8c078" opacity="0.52"/><rect x="882" y="205" width="8" height="6" fill="#a9b06e" opacity="0.34"/><rect x="834" y="146" width="5" height="4" fill="#d4c282" opacity="0.48"/><rect x="847" y="154" width="3" height="6" fill="#d8d890" opacity="0.51"/><rect x="892" y="258" width="8" height="5" fill="#a8c078" opacity="0.61"/><rect x="816" y="75" width="3" height="2" fill="#c8b473" opacity="0.34"/><rect x="857" y="111" width="4" height="5" fill="#d4c282" opacity="0.63"/><rect x="846" y="147" width="8" height="2" fill="#c9bb7a" opacity="0.62"/><rect x="740" y="301" width="8" height="4" fill="#a8c078" opacity="0.36"/><rect x="863" y="282" width="4" height="2" fill="#a8c078" opacity="0.42"/><rect x="894" y="330" width="5" height="2" fill="#c8b473" opacity="0.58"/><rect x="759" y="301" width="7" height="4" fill="#c9bb7a" opacity="0.59"/><rect x="820" y="230" width="4" height="5" fill="#d8d890" opacity="0.33"/><rect x="845" y="118" width="3" height="3" fill="#a8c078" opacity="0.27"/><rect x="772" y="139" width="3" height="5" fill="#c8b473" opacity="0.40"/><rect x="850" y="109" width="3" height="6" fill="#c8b473" opacity="0.60"/><rect x="835" y="294" width="4" height="9" fill="#c9bb7a" opacity="0.28"/><rect x="849" y="209" width="3" height="3" fill="#d4c282" opacity="0.44"/><rect x="819" y="93" width="4" height="4" fill="#c9bb7a" opacity="0.40"/><rect x="775" y="323" width="8" height="9" fill="#c8b473" opacity="0.30"/><rect x="784" y="132" width="4" height="2" fill="#c9bb7a" opacity="0.42"/><rect x="865" y="98" width="4" height="5" fill="#c8b473" opacity="0.66"/><rect x="870" y="168" width="8" height="9" fill="#d8d890" opacity="0.27"/><rect x="884" y="120" width="8" height="3" fill="#b9ad6c" opacity="0.33"/><rect x="894" y="212" width="2" height="3" fill="#a9b06e" opacity="0.55"/><rect x="861" y="300" width="6" height="3" fill="#a9b06e" opacity="0.49"/><rect x="848" y="330" width="6" height="3" fill="#d4c282" opacity="0.26"/><rect x="851" y="78" width="3" height="2" fill="#d4c282" opacity="0.61"/><rect x="822" y="222" width="4" height="5" fill="#a8c078" opacity="0.42"/><rect x="835" y="184" width="2" height="8" fill="#b9ad6c" opacity="0.49"/><rect x="837" y="234" width="2" height="3" fill="#c9bb7a" opacity="0.67"/><rect x="741" y="279" width="4" height="3" fill="#b8c888" opacity="0.59"/><rect x="801" y="174" width="2" height="9" fill="#d4c282" opacity="0.49"/><rect x="747" y="173" width="8" height="5" fill="#d4c282" opacity="0.38"/><rect x="882" y="327" width="5" height="2" fill="#d4c282" opacity="0.31"/><rect x="723" y="228" width="8" height="3" fill="#b8c888" opacity="0.34"/><rect x="855" y="263" width="4" height="8" fill="#d4c282" opacity="0.32"/><rect x="762" y="292" width="4" height="3" fill="#d4c282" opacity="0.55"/><rect x="824" y="83" width="8" height="9" fill="#b9ad6c" opacity="0.38"/><rect x="734" y="94" width="7" height="6" fill="#c9bb7a" opacity="0.31"/><rect x="840" y="95" width="3" height="4" fill="#c9bb7a" opacity="0.47"/><rect x="781" y="245" width="3" height="6" fill="#c9bb7a" opacity="0.68"/><rect x="752" y="152" width="4" height="8" fill="#b8c888" opacity="0.63"/><rect x="746" y="264" width="7" height="9" fill="#d8d890" opacity="0.41"/><rect x="777" y="216" width="3" height="3" fill="#b8c888" opacity="0.64"/><rect x="747" y="212" width="4" height="3" fill="#b9ad6c" opacity="0.65"/><rect x="875" y="237" width="6" height="4" fill="#c8b473" opacity="0.50"/><rect x="820" y="336" width="7" height="4" fill="#c9bb7a" opacity="0.43"/><rect x="882" y="226" width="4" height="4" fill="#d8d890" opacity="0.48"/><rect x="738" y="166" width="2" height="4" fill="#d4c282" opacity="0.59"/><rect x="747" y="111" width="3" height="9" fill="#c9bb7a" opacity="0.27"/><rect x="859" y="130" width="4" height="6" fill="#a9b06e" opacity="0.27"/><rect x="759" y="311" width="5" height="8" fill="#d8d890" opacity="0.66"/><rect x="881" y="79" width="5" height="3" fill="#b8c888" opacity="0.63"/><rect x="769" y="214" width="3" height="8" fill="#a8c078" opacity="0.41"/><rect x="840" y="292" width="8" height="5" fill="#a8c078" opacity="0.69"/><rect x="762" y="177" width="5" height="9" fill="#d8d890" opacity="0.65"/><rect x="723" y="304" width="7" height="4" fill="#a9b06e" opacity="0.28"/><rect x="838" y="125" width="3" height="4" fill="#c9bb7a" opacity="0.52"/><rect x="869" y="245" width="6" height="6" fill="#b9ad6c" opacity="0.47"/><rect x="808" y="124" width="3" height="8" fill="#c8b473" opacity="0.36"/><rect x="745" y="227" width="3" height="2" fill="#d4c282" opacity="0.28"/><rect x="768" y="116" width="6" height="2" fill="#b8c888" opacity="0.68"/><rect x="761" y="231" width="7" height="9" fill="#d4c282" opacity="0.35"/><rect x="796" y="106" width="3" height="5" fill="#d4c282" opacity="0.58"/><rect x="784" y="190" width="3" height="4" fill="#a8c078" opacity="0.42"/><rect x="742" y="122" width="8" height="8" fill="#d4c282" opacity="0.52"/><rect x="754" y="310" width="2" height="3" fill="#b9ad6c" opacity="0.47"/><rect x="745" y="230" width="2" height="8" fill="#a8c078" opacity="0.42"/><rect x="730" y="210" width="4" height="9" fill="#a8c078" opacity="0.41"/><rect x="867" y="311" width="3" height="8" fill="#d4c282" opacity="0.36"/><rect x="860" y="312" width="3" height="5" fill="#a8c078" opacity="0.37"/><rect x="723" y="267" width="2" height="3" fill="#c8b473" opacity="0.42"/><rect x="759" y="284" width="6" height="6" fill="#b9ad6c" opacity="0.32"/><rect x="839" y="136" width="8" height="8" fill="#c9bb7a" opacity="0.53"/><rect x="901" y="175" width="4" height="8" fill="#d8d890" opacity="0.33"/><rect x="823" y="198" width="4" height="6" fill="#a8c078" opacity="0.58"/><rect x="876" y="245" width="4" height="9" fill="#d4c282" opacity="0.30"/><rect x="814" y="279" width="8" height="2" fill="#d4c282" opacity="0.43"/><rect x="836" y="284" width="3" height="9" fill="#a8c078" opacity="0.29"/><rect x="769" y="167" width="2" height="8" fill="#a8c078" opacity="0.53"/><rect x="816" y="259" width="2" height="4" fill="#d8d890" opacity="0.45"/><rect x="758" y="244" width="8" height="5" fill="#a9b06e" opacity="0.27"/><rect x="830" y="206" width="4" height="4" fill="#c8b473" opacity="0.41"/><rect x="840" y="329" width="3" height="5" fill="#a8c078" opacity="0.41"/><rect x="793" y="225" width="8" height="2" fill="#b9ad6c" opacity="0.66"/><rect x="821" y="263" width="8" height="6" fill="#c9bb7a" opacity="0.68"/><rect x="772" y="231" width="4" height="9" fill="#a8c078" opacity="0.51"/><rect x="769" y="177" width="3" height="3" fill="#b8c888" opacity="0.40"/><rect x="743" y="206" width="4" height="5" fill="#d8d890" opacity="0.68"/><rect x="823" y="274" width="5" height="9" fill="#d8d890" opacity="0.65"/><rect x="877" y="197" width="4" height="3" fill="#a8c078" opacity="0.54"/><rect x="901" y="249" width="4" height="6" fill="#a8c078" opacity="0.68"/><rect x="815" y="71" width="4" height="4" fill="#b8c888" opacity="0.29"/><rect x="843" y="288" width="3" height="4" fill="#d8d890" opacity="0.39"/><rect x="761" y="222" width="3" height="4" fill="#d8d890" opacity="0.58"/><rect x="764" y="133" width="4" height="4" fill="#a9b06e" opacity="0.34"/><rect x="767" y="234" width="3" height="3" fill="#b9ad6c" opacity="0.66"/><rect x="844" y="246" width="2" height="2" fill="#d8d890" opacity="0.42"/><rect x="779" y="309" width="4" height="9" fill="#d4c282" opacity="0.69"/><rect x="887" y="143" width="4" height="4" fill="#c8b473" opacity="0.49"/><rect x="798" y="320" width="2" height="6" fill="#a8c078" opacity="0.64"/><rect x="862" y="191" width="3" height="9" fill="#c9bb7a" opacity="0.56"/><rect x="724" y="124" width="3" height="6" fill="#c9bb7a" opacity="0.53"/><rect x="769" y="215" width="4" height="5" fill="#d8d890" opacity="0.68"/><rect x="784" y="117" width="6" height="4" fill="#a8c078" opacity="0.57"/><rect x="789" y="297" width="4" height="9" fill="#d4c282" opacity="0.51"/><rect x="898" y="252" width="3" height="5" fill="#a9b06e" opacity="0.50"/><rect x="876" y="121" width="3" height="9" fill="#c8b473" opacity="0.33"/><rect x="812" y="335" width="8" height="6" fill="#d8d890" opacity="0.39"/><rect x="823" y="220" width="6" height="3" fill="#d4c282" opacity="0.28"/><rect x="868" y="196" width="3" height="9" fill="#c9bb7a" opacity="0.37"/><rect x="787" y="217" width="4" height="6" fill="#c8b473" opacity="0.44"/><rect x="785" y="250" width="4" height="4" fill="#b8c888" opacity="0.41"/><rect x="843" y="199" width="7" height="3" fill="#a8c078" opacity="0.53"/><rect x="805" y="324" width="3" height="6" fill="#a8c078" opacity="0.53"/><rect x="825" y="296" width="3" height="3" fill="#d4c282" opacity="0.40"/><rect x="778" y="243" width="4" height="8" fill="#b8c888" opacity="0.65"/><rect x="863" y="320" width="8" height="9" fill="#a8c078" opacity="0.33"/><rect x="876" y="102" width="4" height="5" fill="#b9ad6c" opacity="0.34"/><rect x="793" y="94" width="7" height="2" fill="#c8b473" opacity="0.60"/><rect x="816" y="335" width="3" height="5" fill="#d4c282" opacity="0.29"/><rect x="890" y="172" width="4" height="4" fill="#b8c888" opacity="0.45"/><rect x="745" y="209" width="3" height="2" fill="#c8b473" opacity="0.55"/><rect x="877" y="155" width="7" height="9" fill="#b8c888" opacity="0.50"/><rect x="746" y="322" width="8" height="4" fill="#d8d890" opacity="0.53"/><rect x="836" y="219" width="8" height="5" fill="#c9bb7a" opacity="0.47"/><rect x="763" y="92" width="4" height="6" fill="#a8c078" opacity="0.37"/><rect x="777" y="68" width="3" height="6" fill="#b8c888" opacity="0.46"/><rect x="723" y="315" width="7" height="5" fill="#c8b473" opacity="0.59"/><rect x="866" y="228" width="2" height="6" fill="#a9b06e" opacity="0.44"/><rect x="823" y="174" width="3" height="8" fill="#a8c078" opacity="0.35"/><rect x="736" y="236" width="8" height="5" fill="#b8c888" opacity="0.54"/><rect x="818" y="140" width="4" height="3" fill="#d4c282" opacity="0.31"/><rect x="742" y="190" width="7" height="5" fill="#d8d890" opacity="0.33"/><rect x="725" y="81" width="8" height="2" fill="#d4c282" opacity="0.69"/><rect x="773" y="102" width="7" height="2" fill="#a9b06e" opacity="0.29"/><rect x="725" y="126" width="6" height="5" fill="#d8d890" opacity="0.70"/><rect x="805" y="280" width="5" height="3" fill="#d4c282" opacity="0.28"/><rect x="862" y="87" width="7" height="4" fill="#a9b06e" opacity="0.65"/><rect x="767" y="170" width="2" height="3" fill="#a9b06e" opacity="0.42"/><rect x="897" y="134" width="2" height="4" fill="#d8d890" opacity="0.58"/><rect x="739" y="246" width="4" height="9" fill="#a8c078" opacity="0.56"/><rect x="778" y="155" width="2" height="3" fill="#b8c888" opacity="0.47"/><rect x="776" y="165" width="2" height="4" fill="#b9ad6c" opacity="0.36"/><rect x="800" y="72" width="4" height="3" fill="#a8c078" opacity="0.61"/><rect x="724" y="79" width="7" height="4" fill="#c9bb7a" opacity="0.60"/><rect x="767" y="202" width="5" height="2" fill="#c8b473" opacity="0.41"/><rect x="750" y="212" width="3" height="4" fill="#d8d890" opacity="0.35"/><rect x="899" y="279" width="5" height="9" fill="#a9b06e" opacity="0.26"/><rect x="790" y="262" width="4" height="2" fill="#d8d890" opacity="0.57"/><rect x="823" y="213" width="7" height="4" fill="#d4c282" opacity="0.49"/><rect x="780" y="194" width="8" height="4" fill="#b9ad6c" opacity="0.49"/><rect x="803" y="288" width="8" height="6" fill="#d8d890" opacity="0.25"/><rect x="837" y="170" width="3" height="2" fill="#c9bb7a" opacity="0.60"/><rect x="765" y="261" width="8" height="8" fill="#a9b06e" opacity="0.49"/><rect x="812" y="216" width="4" height="6" fill="#a8c078" opacity="0.54"/><rect x="742" y="208" width="3" height="2" fill="#d4c282" opacity="0.33"/><rect x="728" y="97" width="4" height="3" fill="#c8b473" opacity="0.51"/><rect x="873" y="244" width="8" height="5" fill="#c8b473" opacity="0.41"/><rect x="831" y="87" width="4" height="9" fill="#b9ad6c" opacity="0.46"/><rect x="837" y="165" width="6" height="6" fill="#c8b473" opacity="0.62"/><rect x="770" y="79" width="3" height="5" fill="#b9ad6c" opacity="0.68"/><rect x="895" y="94" width="4" height="8" fill="#a9b06e" opacity="0.34"/><rect x="840" y="221" width="3" height="8" fill="#b9ad6c" opacity="0.59"/><rect x="826" y="249" width="6" height="3" fill="#d4c282" opacity="0.61"/><rect x="821" y="203" width="3" height="9" fill="#c9bb7a" opacity="0.66"/><rect x="821" y="335" width="5" height="8" fill="#a8c078" opacity="0.62"/><rect x="780" y="133" width="8" height="4" fill="#a8c078" opacity="0.59"/><rect x="889" y="136" width="7" height="9" fill="#a8c078" opacity="0.25"/><rect x="728" y="144" width="2" height="4" fill="#b8c888" opacity="0.25"/><rect x="899" y="126" width="5" height="2" fill="#b8c888" opacity="0.66"/><rect x="814" y="221" width="3" height="3" fill="#c8b473" opacity="0.46"/><rect x="750" y="139" width="4" height="4" fill="#b8c888" opacity="0.61"/><rect x="739" y="175" width="4" height="3" fill="#c9bb7a" opacity="0.61"/><rect x="753" y="289" width="3" height="5" fill="#c8b473" opacity="0.58"/><rect x="826" y="89" width="2" height="6" fill="#c9bb7a" opacity="0.65"/><rect x="800" y="317" width="3" height="4" fill="#c8b473" opacity="0.54"/><rect x="836" y="83" width="8" height="2" fill="#c9bb7a" opacity="0.49"/><rect x="749" y="203" width="4" height="4" fill="#c8b473" opacity="0.55"/><rect x="902" y="328" width="8" height="3" fill="#a9b06e" opacity="0.44"/><rect x="864" y="108" width="5" height="3" fill="#d8d890" opacity="0.51"/><rect x="731" y="175" width="3" height="8" fill="#a8c078" opacity="0.60"/><rect x="745" y="104" width="8" height="4" fill="#d8d890" opacity="0.43"/><rect x="825" y="218" width="8" height="4" fill="#a9b06e" opacity="0.28"/><rect x="862" y="155" width="3" height="3" fill="#a8c078" opacity="0.44"/><rect x="785" y="154" width="2" height="5" fill="#d4c282" opacity="0.69"/><rect x="833" y="333" width="7" height="4" fill="#d8d890" opacity="0.27"/><rect x="869" y="122" width="5" height="4" fill="#b9ad6c" opacity="0.30"/><rect x="732" y="322" width="3" height="5" fill="#c8b473" opacity="0.40"/><rect x="867" y="150" width="7" height="2" fill="#c9bb7a" opacity="0.34"/><rect x="819" y="123" width="8" height="5" fill="#d8d890" opacity="0.53"/><rect x="901" y="254" width="2" height="8" fill="#c8b473" opacity="0.36"/><rect x="733" y="122" width="4" height="2" fill="#d8d890" opacity="0.54"/><rect x="724" y="172" width="4" height="6" fill="#b9ad6c" opacity="0.26"/><rect x="878" y="242" width="4" height="8" fill="#b9ad6c" opacity="0.66"/><rect x="809" y="228" width="3" height="4" fill="#a9b06e" opacity="0.48"/><rect x="804" y="316" width="2" height="2" fill="#a9b06e" opacity="0.67"/><rect x="777" y="199" width="3" height="2" fill="#c9bb7a" opacity="0.56"/><rect x="786" y="149" width="8" height="5" fill="#c8b473" opacity="0.53"/><rect x="880" y="307" width="2" height="5" fill="#a9b06e" opacity="0.32"/><rect x="883" y="244" width="3" height="8" fill="#a9b06e" opacity="0.44"/><rect x="825" y="182" width="4" height="6" fill="#d8d890" opacity="0.49"/><rect x="759" y="105" width="8" height="4" fill="#d4c282" opacity="0.39"/><rect x="849" y="208" width="3" height="8" fill="#d4c282" opacity="0.55"/><rect x="824" y="110" width="3" height="3" fill="#d4c282" opacity="0.39"/><rect x="880" y="263" width="5" height="8" fill="#a8c078" opacity="0.39"/><rect x="856" y="288" width="4" height="4" fill="#a9b06e" opacity="0.30"/><rect x="755" y="272" width="4" height="4" fill="#a9b06e" opacity="0.35"/><rect x="727" y="89" width="7" height="4" fill="#d8d890" opacity="0.57"/><rect x="789" y="296" width="7" height="9" fill="#d4c282" opacity="0.32"/><rect x="763" y="178" width="2" height="5" fill="#a8c078" opacity="0.35"/><rect x="843" y="122" width="4" height="3" fill="#d4c282" opacity="0.67"/><rect x="899" y="300" width="7" height="6" fill="#d8d890" opacity="0.65"/><rect x="799" y="276" width="6" height="6" fill="#a8c078" opacity="0.53"/><rect x="856" y="227" width="8" height="2" fill="#b9ad6c" opacity="0.45"/><rect x="871" y="79" width="4" height="8" fill="#c8b473" opacity="0.50"/><rect x="815" y="237" width="2" height="4" fill="#b8c888" opacity="0.45"/><rect x="881" y="275" width="4" height="9" fill="#d4c282" opacity="0.44"/><rect x="832" y="83" width="8" height="4" fill="#d8d890" opacity="0.62"/><rect x="803" y="262" width="3" height="4" fill="#d4c282" opacity="0.43"/><rect x="780" y="75" width="7" height="4" fill="#d8d890" opacity="0.29"/><rect x="780" y="242" width="3" height="3" fill="#b9ad6c" opacity="0.30"/><rect x="803" y="165" width="8" height="8" fill="#d4c282" opacity="0.42"/><rect x="791" y="274" width="5" height="4" fill="#d4c282" opacity="0.64"/><rect x="754" y="259" width="6" height="5" fill="#b8c888" opacity="0.58"/><rect x="895" y="145" width="3" height="3" fill="#d4c282" opacity="0.68"/><rect x="723" y="273" width="2" height="9" fill="#d8d890" opacity="0.63"/><rect x="820" y="70" width="7" height="4" fill="#a9b06e" opacity="0.51"/><rect x="808" y="178" width="3" height="2" fill="#a9b06e" opacity="0.65"/><rect x="772" y="236" width="4" height="2" fill="#d4c282" opacity="0.32"/><rect x="840" y="78" width="2" height="5" fill="#c9bb7a" opacity="0.66"/><rect x="731" y="180" width="3" height="4" fill="#b8c888" opacity="0.52"/><rect x="846" y="227" width="8" height="4" fill="#d8d890" opacity="0.59"/><rect x="787" y="78" width="4" height="6" fill="#c9bb7a" opacity="0.65"/><rect x="870" y="271" width="8" height="3" fill="#b8c888" opacity="0.46"/><rect x="744" y="298" width="5" height="8" fill="#a9b06e" opacity="0.56"/><rect x="832" y="97" width="8" height="3" fill="#d8d890" opacity="0.58"/><rect x="831" y="279" width="4" height="8" fill="#c9bb7a" opacity="0.37"/><rect x="826" y="235" width="3" height="9" fill="#d8d890" opacity="0.47"/><rect x="754" y="231" width="4" height="4" fill="#c8b473" opacity="0.30"/><rect x="806" y="282" width="4" height="8" fill="#a8c078" opacity="0.27"/><rect x="785" y="284" width="4" height="2" fill="#a9b06e" opacity="0.56"/><rect x="768" y="86" width="4" height="6" fill="#c8b473" opacity="0.30"/><rect x="782" y="174" width="2" height="4" fill="#a9b06e" opacity="0.40"/><rect x="783" y="248" width="7" height="2" fill="#d4c282" opacity="0.47"/><rect x="835" y="307" width="8" height="6" fill="#d8d890" opacity="0.60"/><rect x="797" y="267" width="8" height="5" fill="#c9bb7a" opacity="0.50"/><rect x="725" y="223" width="5" height="6" fill="#b9ad6c" opacity="0.69"/><rect x="772" y="76" width="6" height="4" fill="#a8c078" opacity="0.33"/><rect x="743" y="278" width="4" height="6" fill="#c8b473" opacity="0.37"/><rect x="738" y="303" width="5" height="9" fill="#b8c888" opacity="0.35"/><rect x="776" y="98" width="2" height="4" fill="#b9ad6c" opacity="0.45"/><rect x="726" y="197" width="8" height="4" fill="#a9b06e" opacity="0.40"/><rect x="809" y="302" width="4" height="6" fill="#d4c282" opacity="0.60"/><rect x="740" y="331" width="8" height="4" fill="#a9b06e" opacity="0.58"/><rect x="805" y="259" width="8" height="3" fill="#c8b473" opacity="0.39"/><rect x="730" y="295" width="3" height="6" fill="#d8d890" opacity="0.65"/><rect x="741" y="273" width="4" height="2" fill="#b8c888" opacity="0.54"/><rect x="760" y="122" width="4" height="5" fill="#c9bb7a" opacity="0.60"/><rect x="843" y="141" width="3" height="5" fill="#b9ad6c" opacity="0.26"/><rect x="834" y="206" width="4" height="6" fill="#c9bb7a" opacity="0.37"/><rect x="892" y="283" width="4" height="4" fill="#b9ad6c" opacity="0.39"/><rect x="883" y="213" width="2" height="4" fill="#c8b473" opacity="0.46"/><rect x="844" y="96" width="2" height="3" fill="#a8c078" opacity="0.43"/><rect x="849" y="307" width="7" height="6" fill="#b8c888" opacity="0.40"/><rect x="758" y="271" width="8" height="3" fill="#d8d890" opacity="0.51"/><rect x="739" y="283" width="7" height="3" fill="#d8d890" opacity="0.39"/><rect x="838" y="273" width="7" height="4" fill="#a9b06e" opacity="0.31"/><rect x="883" y="137" width="5" height="8" fill="#d4c282" opacity="0.56"/><rect x="842" y="279" width="5" height="9" fill="#d8d890" opacity="0.26"/><rect x="808" y="162" width="7" height="4" fill="#b8c888" opacity="0.60"/><rect x="831" y="102" width="3" height="8" fill="#b9ad6c" opacity="0.40"/><rect x="839" y="280" width="8" height="9" fill="#a8c078" opacity="0.52"/><rect x="765" y="133" width="3" height="9" fill="#a8c078" opacity="0.28"/><rect x="759" y="254" width="6" height="8" fill="#c9bb7a" opacity="0.50"/><rect x="765" y="246" width="3" height="9" fill="#b9ad6c" opacity="0.52"/><rect x="805" y="217" width="7" height="4" fill="#b8c888" opacity="0.68"/><rect x="735" y="97" width="6" height="6" fill="#d8d890" opacity="0.54"/><rect x="733" y="126" width="3" height="2" fill="#d4c282" opacity="0.55"/><rect x="804" y="146" width="7" height="4" fill="#a9b06e" opacity="0.56"/><rect x="779" y="221" width="4" height="8" fill="#c9bb7a" opacity="0.70"/><rect x="827" y="232" width="8" height="8" fill="#d4c282" opacity="0.63"/><rect x="733" y="309" width="2" height="2" fill="#c9bb7a" opacity="0.30"/><rect x="773" y="76" width="6" height="8" fill="#c9bb7a" opacity="0.57"/><rect x="795" y="185" width="4" height="4" fill="#d8d890" opacity="0.31"/><rect x="822" y="294" width="5" height="8" fill="#d4c282" opacity="0.38"/><rect x="879" y="102" width="2" height="3" fill="#c8b473" opacity="0.31"/><rect x="881" y="244" width="3" height="3" fill="#d4c282" opacity="0.54"/><rect x="797" y="190" width="6" height="4" fill="#d8d890" opacity="0.48"/><rect x="821" y="189" width="5" height="4" fill="#d4c282" opacity="0.44"/><rect x="723" y="202" width="4" height="5" fill="#a8c078" opacity="0.67"/><rect x="826" y="77" width="2" height="9" fill="#c9bb7a" opacity="0.30"/><rect x="809" y="253" width="3" height="5" fill="#d8d890" opacity="0.48"/><rect x="816" y="231" width="4" height="9" fill="#b9ad6c" opacity="0.56"/><rect x="819" y="223" width="2" height="6" fill="#c8b473" opacity="0.46"/><rect x="814" y="194" width="5" height="8" fill="#c9bb7a" opacity="0.68"/><rect x="866" y="146" width="2" height="5" fill="#b8c888" opacity="0.28"/><rect x="807" y="113" width="2" height="5" fill="#c8b473" opacity="0.38"/><rect x="737" y="203" width="4" height="5" fill="#d4c282" opacity="0.53"/><rect x="772" y="137" width="3" height="4" fill="#d4c282" opacity="0.55"/><rect x="789" y="115" width="4" height="9" fill="#d4c282" opacity="0.61"/><rect x="877" y="160" width="3" height="4" fill="#d4c282" opacity="0.63"/><rect x="857" y="179" width="6" height="4" fill="#d8d890" opacity="0.58"/><rect x="752" y="223" width="5" height="2" fill="#b8c888" opacity="0.59"/><rect x="743" y="113" width="6" height="9" fill="#b8c888" opacity="0.46"/><rect x="893" y="315" width="4" height="8" fill="#a8c078" opacity="0.46"/><rect x="748" y="301" width="2" height="5" fill="#d8d890" opacity="0.42"/><rect x="779" y="210" width="2" height="3" fill="#c9bb7a" opacity="0.68"/><rect x="800" y="314" width="4" height="6" fill="#b8c888" opacity="0.37"/><rect x="740" y="243" width="6" height="9" fill="#a9b06e" opacity="0.58"/><rect x="828" y="120" width="5" height="4" fill="#c9bb7a" opacity="0.50"/><rect x="843" y="291" width="2" height="8" fill="#b9ad6c" opacity="0.49"/><rect x="845" y="162" width="4" height="5" fill="#a9b06e" opacity="0.27"/><rect x="833" y="83" width="4" height="3" fill="#b9ad6c" opacity="0.29"/><rect x="831" y="169" width="3" height="3" fill="#d4c282" opacity="0.36"/><rect x="806" y="319" width="7" height="5" fill="#a8c078" opacity="0.56"/><rect x="842" y="274" width="4" height="4" fill="#b9ad6c" opacity="0.37"/><rect x="733" y="172" width="2" height="5" fill="#b8c888" opacity="0.33"/><rect x="734" y="330" width="4" height="8" fill="#d4c282" opacity="0.54"/><rect x="742" y="213" width="6" height="4" fill="#b9ad6c" opacity="0.66"/><rect x="851" y="96" width="3" height="3" fill="#b8c888" opacity="0.60"/><rect x="725" y="201" width="2" height="2" fill="#a8c078" opacity="0.37"/><rect x="848" y="310" width="2" height="9" fill="#d8d890" opacity="0.45"/><rect x="874" y="277" width="3" height="4" fill="#c8b473" opacity="0.42"/><rect x="846" y="277" width="3" height="6" fill="#c9bb7a" opacity="0.56"/><rect x="794" y="237" width="3" height="6" fill="#c9bb7a" opacity="0.29"/><rect x="805" y="273" width="4" height="4" fill="#c8b473" opacity="0.69"/><rect x="841" y="148" width="6" height="3" fill="#c9bb7a" opacity="0.47"/><rect x="881" y="185" width="4" height="4" fill="#c8b473" opacity="0.34"/><rect x="852" y="227" width="7" height="8" fill="#b9ad6c" opacity="0.61"/><rect x="838" y="202" width="7" height="2" fill="#c8b473" opacity="0.40"/><rect x="783" y="261" width="6" height="3" fill="#a9b06e" opacity="0.61"/><rect x="842" y="191" width="8" height="4" fill="#a9b06e" opacity="0.67"/><rect x="729" y="106" width="2" height="9" fill="#c8b473" opacity="0.36"/><rect x="839" y="72" width="2" height="5" fill="#b9ad6c" opacity="0.46"/><rect x="753" y="226" width="3" height="3" fill="#d8d890" opacity="0.52"/><rect x="833" y="85" width="4" height="8" fill="#c9bb7a" opacity="0.62"/><rect x="899" y="250" width="5" height="3" fill="#d4c282" opacity="0.39"/><rect x="896" y="125" width="2" height="4" fill="#c9bb7a" opacity="0.28"/><rect x="771" y="271" width="3" height="6" fill="#d4c282" opacity="0.45"/><rect x="889" y="79" width="3" height="8" fill="#d4c282" opacity="0.26"/><rect x="810" y="70" width="3" height="3" fill="#b8c888" opacity="0.44"/><rect x="867" y="275" width="3" height="4" fill="#d4c282" opacity="0.54"/><rect x="816" y="178" width="3" height="2" fill="#d4c282" opacity="0.57"/><rect x="832" y="92" width="4" height="6" fill="#a8c078" opacity="0.25"/><rect x="764" y="99" width="8" height="3" fill="#c9bb7a" opacity="0.64"/><rect x="900" y="204" width="7" height="4" fill="#b8c888" opacity="0.27"/><rect x="742" y="108" width="7" height="9" fill="#d4c282" opacity="0.32"/><rect x="888" y="82" width="5" height="5" fill="#a9b06e" opacity="0.45"/><rect x="782" y="284" width="7" height="2" fill="#b9ad6c" opacity="0.58"/><rect x="888" y="115" width="2" height="9" fill="#b9ad6c" opacity="0.28"/><rect x="764" y="187" width="5" height="8" fill="#a9b06e" opacity="0.59"/><rect x="884" y="130" width="3" height="6" fill="#a9b06e" opacity="0.29"/><rect x="855" y="301" width="6" height="4" fill="#b9ad6c" opacity="0.46"/><rect x="809" y="307" width="3" height="4" fill="#d8d890" opacity="0.33"/><rect x="789" y="191" width="4" height="6" fill="#b8c888" opacity="0.34"/><rect x="745" y="254" width="2" height="5" fill="#d4c282" opacity="0.30"/><rect x="806" y="180" width="5" height="4" fill="#b8c888" opacity="0.52"/><rect x="864" y="239" width="3" height="4" fill="#b9ad6c" opacity="0.44"/><rect x="816" y="299" width="4" height="9" fill="#d8d890" opacity="0.38"/><rect x="853" y="265" width="4" height="4" fill="#c9bb7a" opacity="0.45"/><rect x="762" y="317" width="3" height="2" fill="#a8c078" opacity="0.69"/><rect x="729" y="194" width="8" height="2" fill="#a8c078" opacity="0.49"/><rect x="808" y="282" width="3" height="9" fill="#d8d890" opacity="0.36"/><rect x="823" y="71" width="6" height="4" fill="#d4c282" opacity="0.41"/><rect x="765" y="336" width="2" height="9" fill="#b8c888" opacity="0.32"/><rect x="805" y="221" width="2" height="9" fill="#d8d890" opacity="0.60"/><rect x="879" y="177" width="5" height="9" fill="#c8b473" opacity="0.64"/><rect x="735" y="307" width="5" height="2" fill="#b8c888" opacity="0.44"/><rect x="771" y="322" width="8" height="4" fill="#b9ad6c" opacity="0.53"/><rect x="782" y="318" width="8" height="6" fill="#c8b473" opacity="0.30"/><rect x="788" y="234" width="5" height="6" fill="#d4c282" opacity="0.54"/><rect x="849" y="218" width="4" height="4" fill="#c9bb7a" opacity="0.36"/><rect x="742" y="196" width="4" height="4" fill="#c9bb7a" opacity="0.41"/><rect x="770" y="250" width="4" height="2" fill="#b9ad6c" opacity="0.42"/><rect x="803" y="202" width="3" height="9" fill="#b8c888" opacity="0.45"/><rect x="788" y="248" width="3" height="4" fill="#d8d890" opacity="0.29"/><rect x="792" y="116" width="3" height="3" fill="#d4c282" opacity="0.37"/><rect x="847" y="201" width="4" height="2" fill="#b8c888" opacity="0.44"/><rect x="845" y="318" width="7" height="6" fill="#a8c078" opacity="0.45"/><rect x="838" y="146" width="3" height="2" fill="#a9b06e" opacity="0.63"/><rect x="816" y="158" width="5" height="6" fill="#d8d890" opacity="0.52"/><rect x="847" y="294" width="7" height="9" fill="#b8c888" opacity="0.51"/><rect x="884" y="150" width="4" height="4" fill="#d8d890" opacity="0.42"/><rect x="774" y="295" width="3" height="6" fill="#b8c888" opacity="0.46"/><rect x="752" y="316" width="8" height="5" fill="#d4c282" opacity="0.69"/><rect x="873" y="254" width="3" height="4" fill="#a9b06e" opacity="0.30"/><rect x="901" y="222" width="7" height="5" fill="#c9bb7a" opacity="0.33"/><rect x="823" y="77" width="5" height="6" fill="#d4c282" opacity="0.42"/><rect x="819" y="112" width="4" height="3" fill="#c8b473" opacity="0.43"/><rect x="812" y="107" width="7" height="6" fill="#d4c282" opacity="0.25"/><rect x="855" y="329" width="5" height="5" fill="#d8d890" opacity="0.65"/><rect x="897" y="270" width="3" height="9" fill="#c9bb7a" opacity="0.56"/><rect x="854" y="309" width="3" height="3" fill="#b8c888" opacity="0.26"/><rect x="833" y="127" width="5" height="3" fill="#c9bb7a" opacity="0.27"/><rect x="837" y="224" width="4" height="5" fill="#a9b06e" opacity="0.26"/><rect x="819" y="187" width="3" height="8" fill="#a9b06e" opacity="0.47"/><rect x="831" y="205" width="2" height="6" fill="#a8c078" opacity="0.32"/><rect x="876" y="167" width="5" height="2" fill="#b8c888" opacity="0.41"/><rect x="777" y="187" width="8" height="3" fill="#a9b06e" opacity="0.58"/><rect x="802" y="334" width="7" height="5" fill="#d4c282" opacity="0.61"/><rect x="897" y="182" width="6" height="4" fill="#b9ad6c" opacity="0.31"/><rect x="777" y="333" width="8" height="6" fill="#b9ad6c" opacity="0.67"/><rect x="828" y="169" width="2" height="8" fill="#b8c888" opacity="0.44"/><rect x="822" y="258" width="3" height="4" fill="#d4c282" opacity="0.62"/><rect x="774" y="199" width="4" height="5" fill="#d8d890" opacity="0.50"/><rect x="805" y="75" width="2" height="4" fill="#b8c888" opacity="0.39"/><rect x="837" y="239" width="3" height="5" fill="#a8c078" opacity="0.33"/><rect x="885" y="241" width="2" height="3" fill="#b8c888" opacity="0.47"/><rect x="897" y="229" width="5" height="9" fill="#a8c078" opacity="0.64"/><rect x="835" y="196" width="3" height="6" fill="#c8b473" opacity="0.63"/><rect x="751" y="84" width="5" height="9" fill="#d4c282" opacity="0.41"/><rect x="732" y="165" width="5" height="2" fill="#b8c888" opacity="0.38"/><rect x="837" y="89" width="4" height="4" fill="#b9ad6c" opacity="0.52"/><rect x="752" y="154" width="5" height="5" fill="#b8c888" opacity="0.56"/><rect x="846" y="94" width="5" height="4" fill="#c8b473" opacity="0.31"/><rect x="773" y="277" width="6" height="6" fill="#d4c282" opacity="0.30"/><rect x="750" y="127" width="4" height="3" fill="#a8c078" opacity="0.46"/><rect x="736" y="287" width="2" height="9" fill="#c9bb7a" opacity="0.39"/><rect x="787" y="287" width="8" height="6" fill="#d4c282" opacity="0.57"/><rect x="727" y="286" width="4" height="4" fill="#d4c282" opacity="0.56"/><rect x="777" y="124" width="3" height="8" fill="#b9ad6c" opacity="0.28"/><rect x="861" y="271" width="2" height="4" fill="#b9ad6c" opacity="0.26"/><rect x="841" y="227" width="7" height="3" fill="#b8c888" opacity="0.27"/><rect x="776" y="71" width="3" height="3" fill="#a9b06e" opacity="0.51"/><rect x="758" y="248" width="2" height="3" fill="#d4c282" opacity="0.63"/><rect x="892" y="322" width="5" height="6" fill="#d4c282" opacity="0.63"/><rect x="863" y="232" width="8" height="3" fill="#b9ad6c" opacity="0.62"/><rect x="859" y="210" width="4" height="5" fill="#d4c282" opacity="0.66"/><rect x="819" y="329" width="3" height="4" fill="#d8d890" opacity="0.41"/><rect x="828" y="186" width="3" height="4" fill="#c9bb7a" opacity="0.69"/><rect x="798" y="206" width="6" height="3" fill="#c9bb7a" opacity="0.31"/><rect x="742" y="104" width="5" height="5" fill="#c8b473" opacity="0.29"/><rect x="811" y="171" width="7" height="5" fill="#d8d890" opacity="0.35"/><rect x="795" y="332" width="6" height="4" fill="#b9ad6c" opacity="0.65"/><rect x="866" y="320" width="5" height="4" fill="#c8b473" opacity="0.70"/><rect x="810" y="96" width="7" height="3" fill="#b9ad6c" opacity="0.31"/><rect x="794" y="226" width="3" height="4" fill="#b9ad6c" opacity="0.41"/><rect x="758" y="122" width="6" height="3" fill="#a9b06e" opacity="0.63"/><rect x="853" y="143" width="4" height="8" fill="#c9bb7a" opacity="0.46"/><rect x="831" y="176" width="7" height="5" fill="#d4c282" opacity="0.60"/><rect x="741" y="135" width="7" height="4" fill="#d4c282" opacity="0.26"/><rect x="855" y="291" width="7" height="2" fill="#d4c282" opacity="0.42"/><rect x="844" y="109" width="3" height="3" fill="#d8d890" opacity="0.61"/><rect x="758" y="245" width="7" height="5" fill="#c9bb7a" opacity="0.61"/><rect x="819" y="73" width="2" height="8" fill="#b9ad6c" opacity="0.42"/><rect x="779" y="169" width="7" height="2" fill="#c8b473" opacity="0.33"/><rect x="841" y="277" width="3" height="9" fill="#a8c078" opacity="0.31"/><rect x="851" y="199" width="3" height="9" fill="#d8d890" opacity="0.46"/><rect x="876" y="204" width="6" height="5" fill="#d8d890" opacity="0.52"/><rect x="790" y="249" width="4" height="6" fill="#c8b473" opacity="0.26"/><rect x="730" y="292" width="5" height="2" fill="#c9bb7a" opacity="0.42"/><rect x="799" y="334" width="6" height="6" fill="#c8b473" opacity="0.55"/><rect x="767" y="242" width="3" height="3" fill="#b8c888" opacity="0.30"/><rect x="753" y="212" width="2" height="9" fill="#a8c078" opacity="0.51"/><rect x="884" y="139" width="7" height="2" fill="#c9bb7a" opacity="0.42"/><rect x="792" y="221" width="7" height="3" fill="#a9b06e" opacity="0.40"/><rect x="812" y="273" width="5" height="4" fill="#b8c888" opacity="0.41"/><rect x="800" y="201" width="3" height="4" fill="#b8c888" opacity="0.37"/><rect x="776" y="222" width="4" height="3" fill="#b9ad6c" opacity="0.52"/><rect x="771" y="220" width="8" height="9" fill="#a8c078" opacity="0.34"/><rect x="865" y="243" width="4" height="5" fill="#a8c078" opacity="0.55"/><rect x="778" y="179" width="4" height="9" fill="#d4c282" opacity="0.65"/><rect x="835" y="206" width="3" height="9" fill="#a9b06e" opacity="0.55"/><rect x="870" y="319" width="4" height="8" fill="#c8b473" opacity="0.49"/><rect x="788" y="108" width="3" height="5" fill="#a8c078" opacity="0.43"/><rect x="877" y="312" width="4" height="8" fill="#b8c888" opacity="0.62"/><rect x="838" y="137" width="4" height="8" fill="#a9b06e" opacity="0.30"/><rect x="757" y="134" width="4" height="9" fill="#d8d890" opacity="0.50"/><rect x="801" y="241" width="2" height="4" fill="#d4c282" opacity="0.37"/><rect x="727" y="280" width="4" height="4" fill="#c8b473" opacity="0.68"/><rect x="809" y="73" width="3" height="6" fill="#b8c888" opacity="0.64"/><rect x="884" y="177" width="5" height="3" fill="#a8c078" opacity="0.67"/><rect x="852" y="106" width="3" height="3" fill="#b8c888" opacity="0.47"/><rect x="738" y="229" width="5" height="6" fill="#a8c078" opacity="0.61"/><rect x="856" y="319" width="4" height="4" fill="#b9ad6c" opacity="0.33"/><rect x="897" y="186" width="4" height="2" fill="#d8d890" opacity="0.49"/><rect x="848" y="98" width="8" height="8" fill="#d8d890" opacity="0.56"/><rect x="895" y="304" width="3" height="6" fill="#d8d890" opacity="0.57"/><rect x="870" y="74" width="2" height="2" fill="#a9b06e" opacity="0.36"/><rect x="791" y="239" width="5" height="3" fill="#a9b06e" opacity="0.64"/><rect x="792" y="312" width="6" height="5" fill="#b8c888" opacity="0.29"/><rect x="870" y="131" width="4" height="4" fill="#d8d890" opacity="0.53"/><rect x="880" y="273" width="6" height="2" fill="#b8c888" opacity="0.64"/><rect x="870" y="320" width="7" height="8" fill="#c9bb7a" opacity="0.57"/><rect x="880" y="288" width="3" height="5" fill="#b9ad6c" opacity="0.41"/><rect x="830" y="286" width="5" height="9" fill="#c8b473" opacity="0.59"/><rect x="837" y="117" width="7" height="4" fill="#c8b473" opacity="0.43"/><rect x="835" y="152" width="3" height="3" fill="#d4c282" opacity="0.36"/><rect x="850" y="274" width="3" height="8" fill="#c9bb7a" opacity="0.45"/><rect x="879" y="104" width="3" height="6" fill="#b8c888" opacity="0.34"/><rect x="797" y="117" width="6" height="4" fill="#c8b473" opacity="0.68"/><rect x="888" y="241" width="4" height="3" fill="#d8d890" opacity="0.34"/><rect x="848" y="113" width="6" height="8" fill="#b8c888" opacity="0.32"/><rect x="894" y="114" width="3" height="2" fill="#a8c078" opacity="0.60"/><rect x="889" y="290" width="7" height="3" fill="#a9b06e" opacity="0.57"/><rect x="756" y="299" width="4" height="5" fill="#d8d890" opacity="0.42"/><rect x="800" y="123" width="4" height="5" fill="#a9b06e" opacity="0.44"/><rect x="796" y="107" width="4" height="5" fill="#a9b06e" opacity="0.53"/><rect x="885" y="167" width="7" height="3" fill="#c8b473" opacity="0.46"/><rect x="879" y="329" width="6" height="4" fill="#a8c078" opacity="0.57"/><rect x="854" y="137" width="3" height="2" fill="#c8b473" opacity="0.40"/><rect x="764" y="311" width="2" height="2" fill="#b8c888" opacity="0.48"/><rect x="791" y="330" width="5" height="4" fill="#c8b473" opacity="0.51"/><rect x="769" y="203" width="5" height="9" fill="#d4c282" opacity="0.29"/><rect x="850" y="184" width="4" height="3" fill="#c9bb7a" opacity="0.27"/><rect x="745" y="302" width="4" height="6" fill="#a8c078" opacity="0.38"/><rect x="880" y="232" width="4" height="6" fill="#a8c078" opacity="0.65"/><rect x="779" y="335" width="3" height="9" fill="#c8b473" opacity="0.34"/><rect x="732" y="117" width="7" height="5" fill="#d4c282" opacity="0.57"/><rect x="801" y="335" width="7" height="2" fill="#d8d890" opacity="0.41"/><rect x="850" y="198" width="7" height="3" fill="#d4c282" opacity="0.31"/><rect x="739" y="301" width="3" height="4" fill="#b8c888" opacity="0.50"/><rect x="841" y="125" width="2" height="4" fill="#a8c078" opacity="0.66"/><rect x="766" y="201" width="3" height="6" fill="#c8b473" opacity="0.38"/><rect x="899" y="101" width="5" height="3" fill="#c9bb7a" opacity="0.32"/><rect x="737" y="291" width="7" height="9" fill="#b8c888" opacity="0.52"/><rect x="723" y="328" width="7" height="6" fill="#d4c282" opacity="0.35"/><rect x="731" y="240" width="5" height="2" fill="#b9ad6c" opacity="0.50"/><rect x="830" y="93" width="4" height="4" fill="#a9b06e" opacity="0.68"/><rect x="878" y="92" width="4" height="4" fill="#a8c078" opacity="0.60"/><rect x="773" y="270" width="3" height="3" fill="#b8c888" opacity="0.47"/><rect x="800" y="284" width="4" height="4" fill="#c9bb7a" opacity="0.55"/><rect x="872" y="205" width="7" height="9" fill="#a8c078" opacity="0.46"/><rect x="823" y="181" width="6" height="6" fill="#d4c282" opacity="0.45"/><rect x="799" y="79" width="5" height="9" fill="#a9b06e" opacity="0.54"/><rect x="850" y="317" width="8" height="3" fill="#b8c888" opacity="0.46"/><rect x="736" y="283" width="4" height="4" fill="#d4c282" opacity="0.56"/><rect x="776" y="135" width="6" height="5" fill="#c8b473" opacity="0.50"/><rect x="887" y="206" width="8" height="8" fill="#a8c078" opacity="0.29"/><rect x="841" y="220" width="4" height="6" fill="#b8c888" opacity="0.51"/><rect x="860" y="72" width="7" height="4" fill="#d4c282" opacity="0.63"/><rect x="730" y="180" width="4" height="6" fill="#d8d890" opacity="0.59"/><rect x="803" y="284" width="5" height="4" fill="#a9b06e" opacity="0.33"/><rect x="856" y="230" width="3" height="8" fill="#c8b473" opacity="0.25"/><rect x="743" y="114" width="7" height="9" fill="#a8c078" opacity="0.64"/><rect x="896" y="229" width="7" height="5" fill="#c9bb7a" opacity="0.56"/><rect x="895" y="249" width="4" height="3" fill="#d4c282" opacity="0.31"/><rect x="756" y="287" width="4" height="2" fill="#a9b06e" opacity="0.47"/><rect x="748" y="133" width="8" height="4" fill="#b9ad6c" opacity="0.39"/><rect x="805" y="195" width="2" height="3" fill="#d4c282" opacity="0.66"/><rect x="855" y="187" width="7" height="9" fill="#c8b473" opacity="0.64"/><rect x="827" y="122" width="6" height="2" fill="#c9bb7a" opacity="0.25"/><rect x="835" y="259" width="6" height="9" fill="#b8c888" opacity="0.27"/><rect x="794" y="206" width="7" height="4" fill="#c8b473" opacity="0.49"/><rect x="798" y="153" width="3" height="5" fill="#a8c078" opacity="0.65"/><rect x="743" y="235" width="5" height="9" fill="#a8c078" opacity="0.26"/><rect x="774" y="120" width="5" height="9" fill="#a9b06e" opacity="0.48"/><rect x="828" y="252" width="7" height="4" fill="#b8c888" opacity="0.58"/><rect x="792" y="180" width="5" height="9" fill="#d4c282" opacity="0.53"/><rect x="773" y="269" width="7" height="4" fill="#d4c282" opacity="0.34"/><rect x="831" y="95" width="6" height="9" fill="#b8c888" opacity="0.36"/><rect x="822" y="336" width="5" height="5" fill="#c9bb7a" opacity="0.55"/><rect x="753" y="298" width="8" height="2" fill="#b9ad6c" opacity="0.40"/><rect x="743" y="129" width="8" height="4" fill="#d8d890" opacity="0.37"/><rect x="783" y="163" width="2" height="5" fill="#d4c282" opacity="0.63"/><rect x="879" y="230" width="3" height="2" fill="#d8d890" opacity="0.61"/><rect x="895" y="271" width="3" height="3" fill="#c8b473" opacity="0.48"/><rect x="752" y="100" width="4" height="6" fill="#d4c282" opacity="0.58"/><rect x="849" y="272" width="7" height="3" fill="#d4c282" opacity="0.54"/><rect x="782" y="105" width="4" height="9" fill="#a8c078" opacity="0.60"/><rect x="723" y="292" width="7" height="6" fill="#b8c888" opacity="0.48"/><rect x="737" y="168" width="6" height="6" fill="#a9b06e" opacity="0.32"/><rect x="858" y="181" width="4" height="4" fill="#a8c078" opacity="0.44"/><rect x="796" y="191" width="8" height="6" fill="#c8b473" opacity="0.45"/><rect x="861" y="260" width="8" height="3" fill="#b9ad6c" opacity="0.40"/><rect x="794" y="275" width="6" height="2" fill="#a8c078" opacity="0.59"/><rect x="841" y="240" width="2" height="5" fill="#a8c078" opacity="0.43"/><rect x="845" y="216" width="4" height="6" fill="#c9bb7a" opacity="0.25"/><rect x="772" y="209" width="3" height="8" fill="#d8d890" opacity="0.54"/><rect x="882" y="235" width="7" height="6" fill="#a8c078" opacity="0.60"/><rect x="881" y="91" width="8" height="6" fill="#a8c078" opacity="0.58"/><rect x="855" y="102" width="8" height="5" fill="#a9b06e" opacity="0.29"/><rect x="821" y="208" width="3" height="2" fill="#c8b473" opacity="0.65"/><rect x="819" y="137" width="4" height="8" fill="#b9ad6c" opacity="0.58"/><rect x="873" y="138" width="8" height="6" fill="#b9ad6c" opacity="0.27"/><rect x="839" y="101" width="4" height="2" fill="#d8d890" opacity="0.40"/><rect x="764" y="268" width="8" height="4" fill="#c9bb7a" opacity="0.38"/><rect x="842" y="286" width="3" height="8" fill="#a9b06e" opacity="0.30"/><rect x="815" y="120" width="5" height="9" fill="#b9ad6c" opacity="0.32"/><rect x="799" y="178" width="3" height="2" fill="#a8c078" opacity="0.65"/><rect x="808" y="188" width="5" height="8" fill="#a8c078" opacity="0.64"/><rect x="827" y="239" width="7" height="9" fill="#a8c078" opacity="0.62"/><rect x="748" y="102" width="7" height="4" fill="#b9ad6c" opacity="0.56"/><rect x="804" y="77" width="3" height="6" fill="#b9ad6c" opacity="0.52"/><rect x="796" y="100" width="4" height="2" fill="#d4c282" opacity="0.30"/><rect x="777" y="168" width="4" height="9" fill="#c8b473" opacity="0.61"/><rect x="748" y="226" width="2" height="5" fill="#b8c888" opacity="0.35"/><rect x="869" y="199" width="3" height="6" fill="#b9ad6c" opacity="0.64"/><rect x="797" y="222" width="7" height="6" fill="#a8c078" opacity="0.46"/><rect x="852" y="230" width="3" height="9" fill="#d8d890" opacity="0.55"/><rect x="749" y="263" width="3" height="8" fill="#a8c078" opacity="0.35"/><rect x="793" y="213" width="7" height="5" fill="#b9ad6c" opacity="0.64"/><rect x="849" y="221" width="4" height="3" fill="#b9ad6c" opacity="0.34"/><rect x="833" y="223" width="2" height="4" fill="#d8d890" opacity="0.48"/><rect x="725" y="244" width="8" height="4" fill="#c8b473" opacity="0.37"/><rect x="759" y="290" width="7" height="3" fill="#c9bb7a" opacity="0.43"/><rect x="730" y="299" width="2" height="6" fill="#a8c078" opacity="0.33"/><rect x="726" y="209" width="6" height="5" fill="#b9ad6c" opacity="0.30"/><rect x="740" y="113" width="3" height="4" fill="#b8c888" opacity="0.60"/><rect x="750" y="323" width="3" height="2" fill="#c9bb7a" opacity="0.33"/><rect x="850" y="148" width="3" height="6" fill="#d4c282" opacity="0.44"/><rect x="780" y="169" width="3" height="2" fill="#a9b06e" opacity="0.36"/><rect x="829" y="131" width="8" height="8" fill="#b9ad6c" opacity="0.37"/><rect x="779" y="216" width="3" height="9" fill="#c8b473" opacity="0.43"/><rect x="764" y="305" width="4" height="3" fill="#a9b06e" opacity="0.59"/><rect x="839" y="102" width="6" height="9" fill="#b9ad6c" opacity="0.63"/><rect x="812" y="278" width="3" height="6" fill="#d4c282" opacity="0.60"/><rect x="819" y="182" width="8" height="9" fill="#c8b473" opacity="0.25"/><rect x="806" y="290" width="4" height="4" fill="#c8b473" opacity="0.28"/><rect x="888" y="141" width="4" height="8" fill="#c9bb7a" opacity="0.63"/><rect x="760" y="293" width="4" height="2" fill="#d4c282" opacity="0.58"/><rect x="823" y="149" width="6" height="3" fill="#d4c282" opacity="0.58"/><rect x="902" y="303" width="4" height="6" fill="#c9bb7a" opacity="0.54"/><rect x="898" y="258" width="4" height="4" fill="#c9bb7a" opacity="0.40"/><rect x="805" y="229" width="2" height="4" fill="#c8b473" opacity="0.52"/><rect x="723" y="71" width="3" height="8" fill="#d8d890" opacity="0.59"/><rect x="819" y="279" width="3" height="2" fill="#d8d890" opacity="0.55"/><rect x="786" y="286" width="5" height="8" fill="#d4c282" opacity="0.63"/><rect x="868" y="332" width="3" height="9" fill="#c9bb7a" opacity="0.67"/><rect x="802" y="127" width="2" height="5" fill="#c9bb7a" opacity="0.34"/><rect x="869" y="236" width="4" height="4" fill="#d8d890" opacity="0.69"/><rect x="729" y="200" width="4" height="2" fill="#a9b06e" opacity="0.69"/><rect x="837" y="98" width="4" height="9" fill="#d4c282" opacity="0.50"/><rect x="841" y="220" width="3" height="3" fill="#d4c282" opacity="0.59"/><rect x="745" y="318" width="4" height="5" fill="#a9b06e" opacity="0.63"/><rect x="726" y="328" width="8" height="5" fill="#d8d890" opacity="0.25"/><rect x="799" y="248" width="2" height="6" fill="#a8c078" opacity="0.63"/><rect x="795" y="101" width="8" height="9" fill="#d8d890" opacity="0.41"/><rect x="859" y="305" width="4" height="2" fill="#b8c888" opacity="0.66"/><rect x="818" y="153" width="6" height="4" fill="#c9bb7a" opacity="0.29"/><rect x="825" y="75" width="4" height="8" fill="#b9ad6c" opacity="0.66"/><rect x="757" y="156" width="3" height="3" fill="#c8b473" opacity="0.47"/><rect x="867" y="227" width="5" height="5" fill="#a9b06e" opacity="0.30"/><rect x="765" y="159" width="2" height="6" fill="#a9b06e" opacity="0.67"/><rect x="862" y="234" width="3" height="9" fill="#b9ad6c" opacity="0.29"/><rect x="733" y="77" width="5" height="3" fill="#d4c282" opacity="0.28"/><rect x="866" y="83" width="6" height="3" fill="#b9ad6c" opacity="0.55"/><rect x="823" y="147" width="6" height="8" fill="#b9ad6c" opacity="0.53"/><rect x="796" y="300" width="2" height="9" fill="#a8c078" opacity="0.46"/><rect x="799" y="234" width="3" height="6" fill="#c8b473" opacity="0.45"/><rect x="781" y="120" width="3" height="2" fill="#b9ad6c" opacity="0.52"/><rect x="873" y="310" width="3" height="5" fill="#c9bb7a" opacity="0.44"/><rect x="852" y="187" width="4" height="4" fill="#c8b473" opacity="0.28"/><rect x="778" y="185" width="5" height="5" fill="#d4c282" opacity="0.32"/><rect x="778" y="160" width="5" height="2" fill="#d4c282" opacity="0.28"/><rect x="813" y="292" width="2" height="8" fill="#c9bb7a" opacity="0.34"/><rect x="758" y="311" width="3" height="6" fill="#a9b06e" opacity="0.55"/><rect x="847" y="331" width="5" height="6" fill="#b8c888" opacity="0.44"/><rect x="751" y="190" width="2" height="9" fill="#a9b06e" opacity="0.66"/><rect x="837" y="254" width="7" height="4" fill="#a9b06e" opacity="0.47"/><rect x="860" y="286" width="6" height="4" fill="#a8c078" opacity="0.33"/><rect x="900" y="165" width="3" height="6" fill="#c8b473" opacity="0.50"/><rect x="748" y="186" width="5" height="2" fill="#c8b473" opacity="0.34"/><rect x="773" y="127" width="4" height="4" fill="#c9bb7a" opacity="0.63"/><rect x="766" y="121" width="3" height="5" fill="#b9ad6c" opacity="0.26"/><rect x="844" y="170" width="3" height="6" fill="#a9b06e" opacity="0.39"/><rect x="765" y="285" width="3" height="8" fill="#b9ad6c" opacity="0.30"/><rect x="881" y="103" width="4" height="4" fill="#a8c078" opacity="0.56"/><rect x="779" y="183" width="4" height="2" fill="#a9b06e" opacity="0.63"/><rect x="775" y="108" width="4" height="2" fill="#b8c888" opacity="0.64"/><rect x="875" y="328" width="7" height="4" fill="#b9ad6c" opacity="0.60"/><rect x="864" y="233" width="3" height="8" fill="#c9bb7a" opacity="0.47"/><rect x="806" y="154" width="5" height="9" fill="#d8d890" opacity="0.46"/><rect x="827" y="239" width="2" height="4" fill="#a9b06e" opacity="0.65"/><rect x="803" y="131" width="4" height="5" fill="#a8c078" opacity="0.65"/><rect x="825" y="319" width="5" height="5" fill="#b9ad6c" opacity="0.31"/><rect x="737" y="187" width="5" height="4" fill="#c8b473" opacity="0.46"/><rect x="834" y="182" width="7" height="8" fill="#a8c078" opacity="0.42"/><rect x="812" y="141" width="2" height="4" fill="#d8d890" opacity="0.36"/><rect x="838" y="164" width="3" height="5" fill="#b9ad6c" opacity="0.60"/><rect x="889" y="94" width="3" height="6" fill="#c8b473" opacity="0.50"/><rect x="782" y="249" width="4" height="5" fill="#b8c888" opacity="0.34"/><rect x="831" y="105" width="8" height="5" fill="#c8b473" opacity="0.60"/><rect x="773" y="161" width="6" height="8" fill="#c8b473" opacity="0.46"/><rect x="814" y="272" width="3" height="8" fill="#a9b06e" opacity="0.35"/><rect x="857" y="195" width="8" height="9" fill="#d8d890" opacity="0.40"/><rect x="737" y="295" width="6" height="8" fill="#a9b06e" opacity="0.45"/><rect x="876" y="76" width="3" height="4" fill="#b8c888" opacity="0.67"/><rect x="724" y="285" width="5" height="6" fill="#a9b06e" opacity="0.44"/><rect x="845" y="176" width="8" height="5" fill="#c9bb7a" opacity="0.51"/><rect x="824" y="77" width="3" height="4" fill="#c9bb7a" opacity="0.51"/><rect x="866" y="313" width="6" height="8" fill="#a9b06e" opacity="0.68"/><rect x="733" y="172" width="7" height="3" fill="#c9bb7a" opacity="0.51"/><rect x="803" y="308" width="3" height="4" fill="#b9ad6c" opacity="0.55"/><rect x="754" y="289" width="7" height="2" fill="#d4c282" opacity="0.34"/><rect x="886" y="171" width="4" height="4" fill="#b8c888" opacity="0.55"/><rect x="735" y="83" width="8" height="2" fill="#d4c282" opacity="0.40"/><rect x="886" y="173" width="3" height="4" fill="#a8c078" opacity="0.47"/><rect x="734" y="324" width="4" height="4" fill="#a9b06e" opacity="0.39"/><rect x="869" y="246" width="3" height="5" fill="#a9b06e" opacity="0.48"/><rect x="845" y="142" width="2" height="4" fill="#d8d890" opacity="0.28"/><rect x="794" y="284" width="8" height="6" fill="#d8d890" opacity="0.46"/><rect x="826" y="266" width="4" height="9" fill="#c9bb7a" opacity="0.57"/><rect x="850" y="148" width="3" height="8" fill="#a9b06e" opacity="0.33"/>
<defs><radialGradient id="shallowG" cx="0.15" cy="0.2" r="1"><stop offset="0" stop-color="#b4d4ee"/><stop offset="0.5" stop-color="#8cbbe6"/><stop offset="1" stop-color="#4e90d2"/></radialGradient><radialGradient id="deepG" cx="0.1" cy="0.1" r="0.9"><stop offset="0" stop-color="#5a98d6"/><stop offset="0.5" stop-color="#3f80c6"/><stop offset="1" stop-color="#3476be"/></radialGradient></defs>
<path d="M829 91.4 L851 79 L851 72 L902 72 L902 201 L829 201 Z" fill="url(#shallowG)"/>
<rect x="887" y="196" width="15" height="54" fill="#4e90d2" />
<path d="M929.5,71.7 L963.25,90.8 L963.25,129.2 L929.5,148.3 L895.75,129.2 L895.75,90.8Z M895.75,129.2 L929.5,148.3 L929.5,186.7 L895.75,205.8 L862.0,186.7 L862.0,148.3Z M963.25,129.2 L997.0,148.3 L997.0,186.7 L963.25,205.8 L929.5,186.7 L929.5,148.3Z" fill="url(#deepG)"/>
<path d="M727.0,71.7 L760.75,90.8 L760.75,129.2 L727.0,148.3 L693.25,129.2 L693.25,90.8Z M760.75,129.2 L794.5,148.3 L794.5,186.7 L760.75,205.8 L727.0,186.7 L727.0,148.3Z" fill="#7a776c"/>
<path d="M829.1 91.4 L852 79.9 L860.4 87.7 L869.8 95 L875 91.9 L879.1 94 L880.2 98.1 L876 102.3 L873.9 111.7 L871.8 116.9 L863.5 120 L857.2 126.3 L853.1 136.7 L850 141.9 L829.1 130.4Z" fill="#7a776c"/>
<clipPath id="roughclip2"><path d="M727.0,71.7 L760.75,90.8 L760.75,129.2 L727.0,148.3 L693.25,129.2 L693.25,90.8Z M760.75,129.2 L794.5,148.3 L794.5,186.7 L760.75,205.8 L727.0,186.7 L727.0,148.3Z M829.1 91.4 L852 79.9 L860.4 87.7 L869.8 95 L875 91.9 L879.1 94 L880.2 98.1 L876 102.3 L873.9 111.7 L871.8 116.9 L863.5 120 L857.2 126.3 L853.1 136.7 L850 141.9 L829.1 130.4Z"/></clipPath>
<g clip-path="url(#roughclip2)">
<rect x="726" y="73" width="176" height="261" fill="#fff" filter="url(#rk1)"/>
<rect x="726" y="73" width="176" height="261" fill="#fff" filter="url(#rk2)"/>
</g>
<path d="M829.1 91.4 L852 79.9 L860.4 87.7 L869.8 95 L875 91.9 L879.1 94 L880.2 98.1 L876 102.3 L873.9 111.7 L871.8 116.9 L863.5 120 L857.2 126.3 L853.1 136.7 L850 141.9 L829.1 130.4Z" fill="none" stroke="#3c7cc8" stroke-width="1"/>
<path d="M794.5,301.7 L828.25,320.8 L828.25,359.2 L794.5,378.3 L760.75,359.2 L760.75,320.8Z" fill="#6a9648"/>
<g clip-path="url(#forestclip)">
<rect x="726" y="73" width="176" height="261" fill="#fff" filter="url(#fo1)"/>
</g>
<path d="M659.5,33.3 L693.25,14.200000000000003 L727.0,33.3 M659.5,33.3 L659.5,71.7 M727.0,33.3 L760.75,14.200000000000003 L794.5,33.3 M727.0,33.3 L727.0,71.7 M794.5,33.3 L828.25,14.200000000000003 L862.0,33.3 M794.5,33.3 L794.5,71.7 M862.0,33.3 L895.75,14.200000000000003 L929.5,33.3 M862.0,33.3 L862.0,71.7 M929.5,33.3 L963.25,14.200000000000003 L997.0,33.3 M929.5,33.3 L929.5,71.7 M625.75,90.8 L659.5,71.7 L693.25,90.8 M625.75,90.8 L625.75,129.2 M693.25,90.8 L727.0,71.7 L760.75,90.8 M693.25,90.8 L693.25,129.2 M760.75,90.8 L794.5,71.7 L828.25,90.8 M760.75,90.8 L760.75,129.2 M828.25,90.8 L862.0,71.7 L895.75,90.8 M828.25,90.8 L828.25,129.2 M895.75,90.8 L929.5,71.7 L963.25,90.8 M895.75,90.8 L895.75,129.2 M659.5,148.3 L693.25,129.2 L727.0,148.3 M659.5,148.3 L659.5,186.7 M727.0,148.3 L760.75,129.2 L794.5,148.3 M727.0,148.3 L727.0,186.7 M794.5,148.3 L828.25,129.2 L862.0,148.3 M794.5,148.3 L794.5,186.7 M862.0,148.3 L895.75,129.2 L929.5,148.3 M862.0,148.3 L862.0,186.7 M929.5,148.3 L963.25,129.2 L997.0,148.3 M929.5,148.3 L929.5,186.7 M625.75,205.8 L659.5,186.7 L693.25,205.8 M625.75,205.8 L625.75,244.2 M693.25,205.8 L727.0,186.7 L760.75,205.8 M693.25,205.8 L693.25,244.2 M760.75,205.8 L794.5,186.7 L828.25,205.8 M760.75,205.8 L760.75,244.2 M828.25,205.8 L862.0,186.7 L895.75,205.8 M828.25,205.8 L828.25,244.2 M895.75,205.8 L929.5,186.7 L963.25,205.8 M895.75,205.8 L895.75,244.2 M659.5,263.3 L693.25,244.2 L727.0,263.3 M659.5,263.3 L659.5,301.7 M727.0,263.3 L760.75,244.2 L794.5,263.3 M727.0,263.3 L727.0,301.7 M794.5,263.3 L828.25,244.2 L862.0,263.3 M794.5,263.3 L794.5,301.7 M862.0,263.3 L895.75,244.2 L929.5,263.3 M862.0,263.3 L862.0,301.7 M929.5,263.3 L963.25,244.2 L997.0,263.3 M929.5,263.3 L929.5,301.7 M625.75,320.8 L659.5,301.7 L693.25,320.8 M625.75,320.8 L625.75,359.2 M693.25,320.8 L727.0,301.7 L760.75,320.8 M693.25,320.8 L693.25,359.2 M760.75,320.8 L794.5,301.7 L828.25,320.8 M760.75,320.8 L760.75,359.2 M828.25,320.8 L862.0,301.7 L895.75,320.8 M828.25,320.8 L828.25,359.2 M895.75,320.8 L929.5,301.7 L963.25,320.8 M895.75,320.8 L895.75,359.2 M659.5,378.3 L693.25,359.2 L727.0,378.3 M659.5,378.3 L659.5,416.7 M727.0,378.3 L760.75,359.2 L794.5,378.3 M727.0,378.3 L727.0,416.7 M794.5,378.3 L828.25,359.2 L862.0,378.3 M794.5,378.3 L794.5,416.7 M862.0,378.3 L895.75,359.2 L929.5,378.3 M862.0,378.3 L862.0,416.7 M929.5,378.3 L963.25,359.2 L997.0,378.3 M929.5,378.3 L929.5,416.7" stroke="#1e1e1e" stroke-width="1" fill="none" opacity="0.8"/>
<path d="M862.0,33.3 L895.75,14.200000000000003 L929.5,33.3 M862.0,33.3 L862.0,71.7 M929.5,33.3 L929.5,71.7 M828.25,90.8 L862.0,71.7 L895.75,90.8 M828.25,90.8 L828.25,129.2 M895.75,90.8 L895.75,129.2 M862.0,148.3 L895.75,129.2 L929.5,148.3 M862.0,148.3 L862.0,186.7 M929.5,148.3 L929.5,186.7 M828.25,205.8 L862.0,186.7 L895.75,205.8 M828.25,205.8 L828.25,244.2 M895.75,205.8 L895.75,244.2 M862.0,263.3 L895.75,244.2 L929.5,263.3 M862.0,263.3 L862.0,301.7 M929.5,263.3 L929.5,301.7 M895.75,90.8 L929.5,71.7 L963.25,90.8 M895.75,90.8 L895.75,129.2 M963.25,90.8 L963.25,129.2 M929.5,148.3 L963.25,129.2 L997.0,148.3 M929.5,148.3 L929.5,186.7 M997.0,148.3 L997.0,186.7" stroke="#2c6cb0" stroke-width="1" fill="none" opacity="0.9"/>
<path d="M753 322 Q766 318 766 306 Q770 295 785 292 Q796 294 799 303 Q792 310 784 318 Q772 324 758 328 Q750 327 753 322Z" fill="#a8cfea" stroke="#3c7cc8" stroke-width="2"/>
<path d="M808 336 L812 322 Q820 314 826 316 Q830 326 832 336Z" fill="#a8cfea" stroke="#3c7cc8" stroke-width="2"/>
<path d="M760.6 244.5 Q780 247 797 261 Q806 252 830 249 L886 250 L904 243" stroke="#3c7cc8" stroke-width="2.5" fill="none"/>
<path d="M797 262 Q803 285 799 302 Q812 304 824 314" stroke="#3c7cc8" stroke-width="2.5" fill="none"/>
<path d="M724 312 Q745 320 758 320" stroke="#3c7cc8" stroke-width="2.5" fill="none"/>
<path d="M887 72 L896 72 L896 82 Q893 86 889 84 Q886 80 887 72Z" fill="#c8d090" stroke="#3c7cc8" stroke-width="1"/>
<circle cx="897" cy="75" r="6" fill="#1a2a9a" stroke="#e08030" stroke-width="1"/>
<path d="M893 74 L901 74 M897 71 L897 79 M893 77 Q897 81 901 77" stroke="#fff" stroke-width="1.2" fill="none"/>
<path d="M726 225 L772 225" stroke="#8a8a80" stroke-width="3.5" fill="none"/>
<path d="M726 225 L772 225" stroke="#f4eea8" stroke-width="1.6" stroke-dasharray="2.5,1.5" fill="none"/>
<path d="M819 220 L840 218" stroke="#8a8a80" stroke-width="3" fill="none"/>
<path d="M819 220 L840 218" stroke="#f4eea8" stroke-width="1.4" stroke-dasharray="2.5,1.5" fill="none"/>
<path d="M832 206 Q834 214 840 216" stroke="#fff" stroke-width="5" fill="none"/>
<path d="M833 210 L838 214" stroke="#5a70c0" stroke-width="1" fill="none"/>
<text x="724.8" y="219" font-size="14" font-weight="bold" fill="#0a0a28" textLength="47.4" lengthAdjust="spacingAndGlyphs" >uchow</text>
<text x="857.3" y="205" font-size="14" font-weight="bold" fill="#101020" textLength="45.4" lengthAdjust="spacingAndGlyphs" >Haich</text>
<text x="725.3" y="287" font-size="12" font-weight="bold" fill="#10106a" textLength="82.4" lengthAdjust="spacingAndGlyphs" >ake Hungtse</text>
</g>
<rect x="725" y="334" width="177" height="17" fill="#1a1a1a" />
<rect x="726" y="335" width="176" height="15" fill="url(#scrollG)" />
<rect x="726" y="335" width="15" height="15" fill="#8a7a68" />
<path d="M738 338 L730 342.5 L738 347Z" fill="#c8c0b0"/>
<rect x="857" y="336" width="15" height="13" fill="#d8d0c4" stroke="#3a3020" stroke-width="1"/>
<rect x="806" y="137" width="7" height="7" fill="#111" />
<circle cx="809.5" cy="140.5" r="2.6" fill="#10a080"/>
<rect x="797" y="146" width="7" height="7" fill="#111" />
<circle cx="800.5" cy="149.5" r="2.6" fill="#d06010"/>
<rect x="824" y="132" width="9" height="11" fill="#111" />
<text x="828.5" y="141.5" font-size="10" font-weight="bold" fill="#fff" text-anchor="middle" >2</text>
<rect x="772" y="194" width="7" height="7" fill="#111" />
<circle cx="775.5" cy="197.5" r="2.6" fill="#10a080"/>
<rect x="763" y="202" width="7" height="7" fill="#111" />
<circle cx="766.5" cy="205.5" r="2.6" fill="#d06010"/>
<rect x="832" y="202" width="7" height="7" fill="#111" />
<circle cx="835.5" cy="205.5" r="2.6" fill="#d06010"/>
<rect x="805.5" y="144.5" width="50" height="50" fill="#000" rx="4" opacity="0.85"/>
<rect x="804" y="143" width="50" height="50" fill="#fff" rx="4"/>
<g transform="translate(805,144) scale(0.8135593220338984)">
<rect x="0" y="0" width="59" height="59" rx="4" fill="#ff0000"/>
<text x="30.8" y="12.3" font-size="9" font-weight="bold" fill="#fff" textLength="15" lengthAdjust="spacingAndGlyphs" text-anchor="middle" >XXX</text>
<rect x="15.8" y="14.8" width="29.4" height="22" fill="#c0f5c0" stroke="#000" stroke-width="1.7"/>
<line x1="16" y1="15" x2="25" y2="21" stroke="#000" stroke-width="1.3"/>
<line x1="45" y1="15" x2="36" y2="21" stroke="#000" stroke-width="1.3"/>
<line x1="16" y1="36.5" x2="25" y2="30.5" stroke="#000" stroke-width="1.3"/>
<line x1="45" y1="36.5" x2="36" y2="30.5" stroke="#000" stroke-width="1.3"/>
<g stroke="#000" fill="none" stroke-width="1.6"><circle cx="30.5" cy="18.5" r="1.6"/><line x1="30.5" y1="20" x2="30.5" y2="33"/><line x1="26.5" y1="22" x2="34.5" y2="22"/><path d="M24 28 Q25 33 30.5 33 Q36 33 37 28"/></g><path d="M23 28 L25.5 26.5 L25.5 29.5Z M38 28 L35.5 26.5 L35.5 29.5Z" fill="#000"/><circle cx="30.5" cy="33" r="1.8" fill="#000"/>
<text x="29.8" y="54.2" font-size="16" fill="#fff" textLength="23.5" lengthAdjust="spacingAndGlyphs" text-anchor="middle" >6-3</text>
<g transform="translate(11.4,48) rotate(-90)">
<text x="0" y="0" font-size="9.5" font-weight="bold" fill="#fff" textLength="45.5" lengthAdjust="spacingAndGlyphs" >Imp. Guard</text>
</g>
<text x="50" y="14.5" font-size="10" font-weight="bold" fill="#fff" textLength="7" lengthAdjust="spacingAndGlyphs" >R</text>
</g>
<rect x="771.5" y="201.5" width="50" height="50" fill="#000" rx="4" opacity="0.85"/>
<rect x="770" y="200" width="50" height="50" fill="#fff" rx="4"/>
<g transform="translate(771,201) scale(0.8135593220338984)">
<rect x="0" y="0" width="59" height="59" rx="4" fill="#ff0000"/>
<text x="30.8" y="12.3" font-size="9" font-weight="bold" fill="#000" textLength="15" lengthAdjust="spacingAndGlyphs" text-anchor="middle" >XXX</text>
<rect x="15.8" y="14.8" width="29.4" height="22" fill="#c8382a" stroke="#000" stroke-width="1.7"/>
<line x1="16" y1="15" x2="25" y2="21" stroke="#000" stroke-width="1.3"/>
<line x1="45" y1="15" x2="36" y2="21" stroke="#000" stroke-width="1.3"/>
<line x1="16" y1="36.5" x2="25" y2="30.5" stroke="#000" stroke-width="1.3"/>
<line x1="45" y1="36.5" x2="36" y2="30.5" stroke="#000" stroke-width="1.3"/>
<text x="30.5" y="30.5" font-size="13" fill="#fff" text-anchor="middle" >W</text>
<text x="29.8" y="54.2" font-size="16" fill="#000" textLength="23.5" lengthAdjust="spacingAndGlyphs" text-anchor="middle" >4-3</text>
<g transform="translate(11.4,58.4) rotate(-90)">
<text x="0" y="0" font-size="9.5" font-weight="bold" fill="#000" textLength="53.4" lengthAdjust="spacingAndGlyphs" >Shanghai Wld</text>
</g>
</g>
<rect x="838.5" y="201.5" width="50" height="50" fill="#000" rx="4" opacity="0.85"/>
<rect x="837" y="200" width="50" height="50" fill="#fff" rx="4"/>
<g transform="translate(838,201) scale(0.8135593220338984)">
<rect x="0" y="0" width="59" height="59" rx="4" fill="#ffff00"/>
<text x="30.8" y="12.3" font-size="9" font-weight="bold" fill="#000" textLength="15" lengthAdjust="spacingAndGlyphs" text-anchor="middle" >XXX</text>
<rect x="15.8" y="14.8" width="29.4" height="22" fill="#ff1010" stroke="#000" stroke-width="1.7"/>
<line x1="16" y1="15" x2="25" y2="21" stroke="#000" stroke-width="1.3"/>
<line x1="45" y1="15" x2="36" y2="21" stroke="#000" stroke-width="1.3"/>
<line x1="16" y1="36.5" x2="25" y2="30.5" stroke="#000" stroke-width="1.3"/>
<line x1="45" y1="36.5" x2="36" y2="30.5" stroke="#000" stroke-width="1.3"/>
<text x="30.5" y="30.5" font-size="13" fill="#fff" text-anchor="middle" >P</text>
<text x="29.8" y="54.2" font-size="16" fill="#000" textLength="23.5" lengthAdjust="spacingAndGlyphs" text-anchor="middle" >3-2</text>
</g>
<defs><linearGradient id="arrG" x1="0" x2="1" y1="0" y2="0"><stop offset="0" stop-color="#ffe830"/><stop offset="0.45" stop-color="#f0a030"/><stop offset="1" stop-color="#c81a28"/></linearGradient><linearGradient id="arrG2" x1="0" x2="0.5" y1="0" y2="1"><stop offset="0" stop-color="#ffe030"/><stop offset="0.5" stop-color="#f09030"/><stop offset="1" stop-color="#c81a28"/></linearGradient></defs>
<path d="M819 223.2 L833 223.2 L831.4 219.2 L847 225.1 L831.4 230.8 L833 227 L819 227Z" fill="url(#arrG)" stroke="#7a3010" stroke-width="0.4"/>
<path d="M840.5 191.5 L844 189.5 L851.2 202 L853.7 198.7 L855.3 215.3 L843.2 204.6 L847.5 204.2Z" fill="url(#arrG2)" stroke="#7a3010" stroke-width="0.4"/>
<path d="M857 221.5 L857 209 L860 212.5 L862.5 208.5 L864 212 L866.5 209.5 L867.5 213 L870 212 L870 221.5Z" fill="#ffe820" stroke="#e02010" stroke-width="1"/>
<rect x="861" y="221.5" width="1.5" height="4" fill="#fff" />
<rect x="901" y="26" width="155" height="385" fill="#151515" />
<rect x="901" y="27" width="59" height="22" fill="url(#darkG)" />
<rect x="960" y="28" width="92" height="20" fill="url(#titleG)" />
<rect x="1052" y="27" width="10" height="22" fill="url(#darkG)" />
<circle cx="910" cy="35" r="8" fill="url(#screwG)" stroke="#4a4a4a" stroke-width="1"/>
<line x1="904.4" y1="37.8" x2="915.6" y2="32.2" stroke="#3a3a3a" stroke-width="2"/>
<line x1="905.2" y1="39.4" x2="915.6" y2="34.2" stroke="#d0d0d0" stroke-width="1"/>
<path d="M927 34 H934 Q936 34 936 36 V43 Q936 45 934 45 H921 Q919 45 920 43 Z" fill="#1a1a1a"/>
<path d="M928 35.5 H934 V39.5 H924Z" fill="#3a3a3a"/>
<path d="M925.0 42 L929.5 37.5 L934.0 42 Z" fill="#b4b4b4"/>
<text x="962.8" y="41.8" font-size="11.5" font-weight="bold" fill="#0a0a14" textLength="22.9" lengthAdjust="spacingAndGlyphs" >M V</text>
<rect x="901" y="49" width="24" height="362" fill="url(#vframeL)" />
<rect x="901" y="49" width="24" height="16" fill="#2a2a2a" />
<rect x="902" y="49" width="22" height="3" fill="#a8a8a8" />
<rect x="902" y="52" width="17" height="13" fill="#8a8a8a" />
<defs><linearGradient id="blkG901" x1="0" x2="0" y1="0" y2="1"><stop offset="0" stop-color="#7a7a7a"/><stop offset="0.5" stop-color="#3a3a3a"/><stop offset="1" stop-color="#1a1a1a"/></linearGradient></defs>
<rect x="906" y="52" width="14" height="12" fill="#111" rx="2.5"/>
<rect x="907" y="53" width="12" height="10" fill="url(#blkG901)" rx="2"/>
<path d="M914 65 L924 65 L924 68 L918 68 Z" fill="#9a9a9a"/>
<rect x="913" y="322" width="8" height="66" fill="#333" />
<path d="M921 322 L921 330 L916 336 L914 336 L914 328 Z" fill="#a0a0a0"/>
<path d="M921 340 L921 346 L917 350 L915 350 L915 344 Z" fill="#1a1a1a"/>
<rect x="921" y="322" width="3" height="75" fill="#a8a8a8" />
<rect x="913" y="353" width="5" height="1.6" fill="#c0c0c0" />
<rect x="913" y="366" width="5" height="1.6" fill="#c0c0c0" />
<rect x="913" y="375" width="5" height="1.6" fill="#c0c0c0" />
<rect x="901" y="388" width="24" height="23" fill="#2a2a2a" />
<rect x="925" y="49" width="131" height="348" fill="#e6cb9c" />
<rect x="925" y="49" width="131" height="348" fill="#fff" filter="url(#sand2)"/>
<rect x="925" y="49" width="131" height="348" fill="#fff" filter="url(#sand)"/>
<rect x="924" y="49" width="1" height="348" fill="#111" />
<rect x="925" y="396" width="131" height="15" fill="url(#hbarG)" />
<path d="M925 399 H943 L937 407 H925Z" fill="#fff"/>
<path d="M945 407 L951 399 H958 L952 407Z" fill="#fff"/>
<path d="M937 407 L943 399 H946 L940 407Z M953 407 L959 399 H962 L956 407Z" fill="#a8a8a8"/>
<path d="M977 407 L983 399 H989 L983 407Z" fill="#a8a8a8"/>
<path d="M1016 407 L1022 399 H1028 L1022 407Z" fill="#a8a8a8"/>
<circle cx="909" cy="399" r="8" fill="url(#screwG)" stroke="#4a4a4a" stroke-width="1"/>
<line x1="903.4" y1="401.8" x2="914.6" y2="396.2" stroke="#3a3a3a" stroke-width="2"/>
<line x1="904.2" y1="403.4" x2="914.6" y2="398.2" stroke="#d0d0d0" stroke-width="1"/>
<text x="927.6" y="62.5" font-size="13" font-weight="bold" fill="#000" textLength="72.4" lengthAdjust="spacingAndGlyphs" >Baltic Sea</text>
<rect x="928" y="64" width="72" height="1.3" fill="#000" />
<text x="927.5" y="78.5" font-size="13" fill="#000" textLength="124.4" lengthAdjust="spacingAndGlyphs" >Bessarabia Ukraine</text>
<text x="927.5" y="94.5" font-size="13" fill="#000" textLength="66.4" lengthAdjust="spacingAndGlyphs" >Belorussia</text>
<text x="927.5" y="110.5" font-size="13" fill="#000" textLength="64.9" lengthAdjust="spacingAndGlyphs" >Black Sea</text>
<text x="927.5" y="126.5" font-size="13" fill="#000" textLength="88.4" lengthAdjust="spacingAndGlyphs" >Central Front</text>
<text x="927.5" y="142.5" font-size="13" fill="#000" textLength="35.4" lengthAdjust="spacingAndGlyphs" >Chita</text>
<text x="927.5" y="158.5" font-size="13" fill="#000" textLength="78.4" lengthAdjust="spacingAndGlyphs" >East Poland</text>
<text x="927.5" y="174.5" font-size="13" fill="#000" textLength="64.4" lengthAdjust="spacingAndGlyphs" >Leningrad</text>
<text x="927.5" y="190.5" font-size="13" fill="#000" textLength="68.9" lengthAdjust="spacingAndGlyphs" >Manchuria</text>
<text x="927.5" y="206.5" font-size="13" fill="#000" textLength="37.9" lengthAdjust="spacingAndGlyphs" >Minsk</text>
<text x="927.5" y="222.5" font-size="13" fill="#000" textLength="66.9" lengthAdjust="spacingAndGlyphs" >Murmansk</text>
<text x="927.5" y="238.5" font-size="13" fill="#000" textLength="49.9" lengthAdjust="spacingAndGlyphs" >Odessa</text>
<text x="927.5" y="254.5" font-size="13" fill="#000" textLength="40.4" lengthAdjust="spacingAndGlyphs" >Persia</text>
<text x="927.5" y="270.5" font-size="13" fill="#000" textLength="39.4" lengthAdjust="spacingAndGlyphs" >Pskov</text>
<text x="927.5" y="286.5" font-size="13" fill="#000" textLength="54.4" lengthAdjust="spacingAndGlyphs" >Moscow</text>
<text x="927.5" y="302.5" font-size="13" fill="#000" textLength="74.9" lengthAdjust="spacingAndGlyphs" >Sevastopol</text>
<text x="927.5" y="318.5" font-size="13" fill="#000" textLength="29.4" lengthAdjust="spacingAndGlyphs" >Sian</text>
<text x="927.5" y="334.5" font-size="13" fill="#000" textLength="102.4" lengthAdjust="spacingAndGlyphs" >Southern Front</text>
<text x="927.5" y="350.5" font-size="13" fill="#000" textLength="33.4" lengthAdjust="spacingAndGlyphs" >Urals</text>
<text x="927.5" y="366.5" font-size="13" fill="#000" textLength="32.9" lengthAdjust="spacingAndGlyphs" >Vilna</text>
<text x="927.5" y="382.5" font-size="13" fill="#000" textLength="77.4" lengthAdjust="spacingAndGlyphs" >Vladivostok</text>
</svg>
</body></html>
